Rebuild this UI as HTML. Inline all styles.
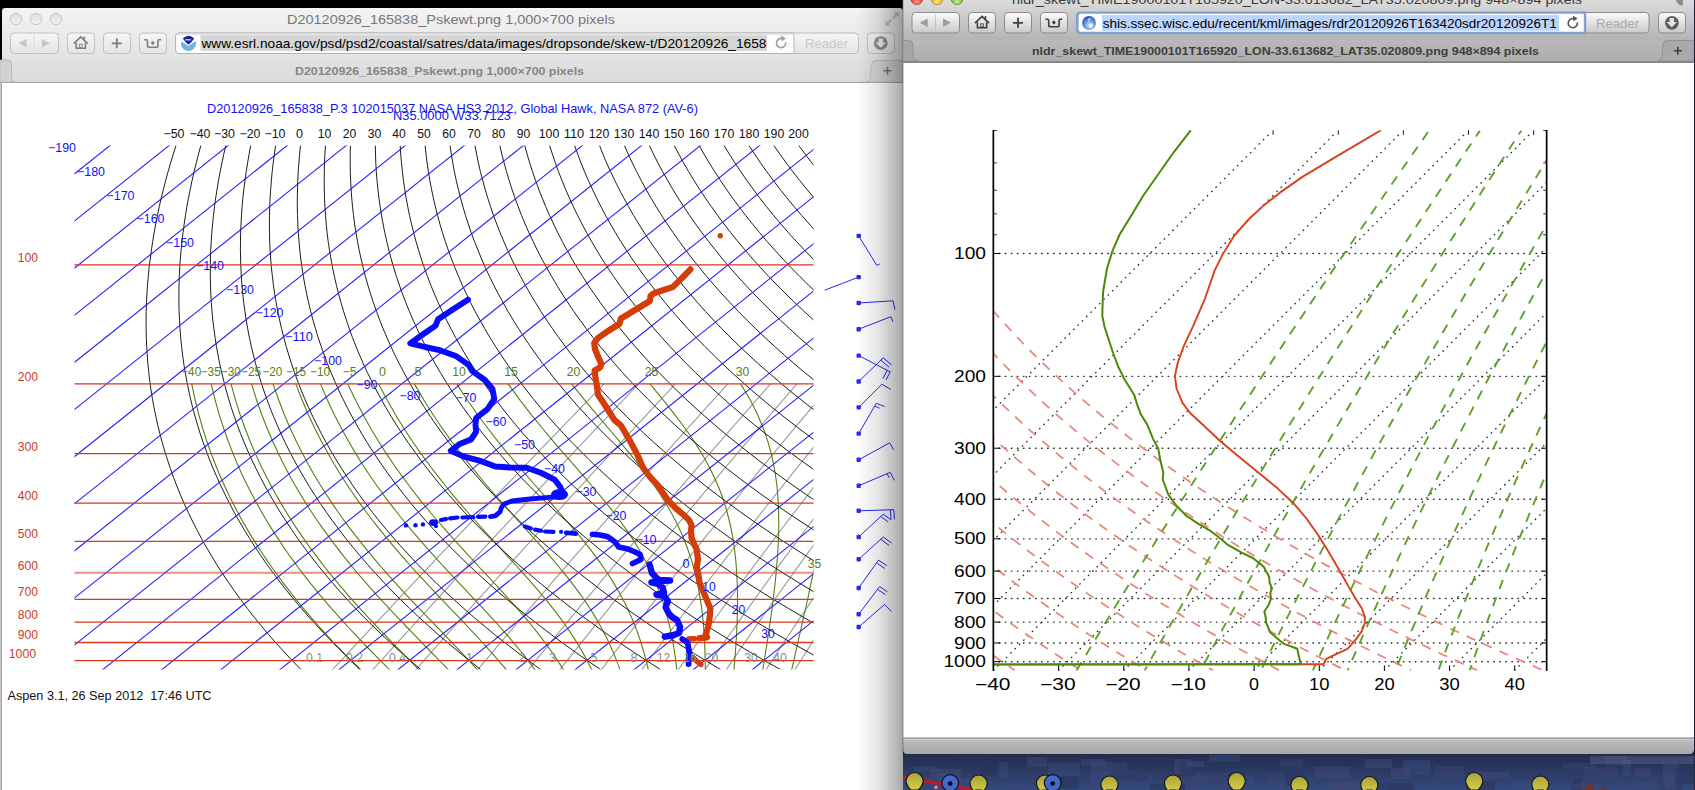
<!DOCTYPE html>
<html><head><meta charset="utf-8"><title>skewt</title>
<style>
html,body{margin:0;padding:0;background:#000;overflow:hidden}
body{width:1695px;height:790px;position:relative}
svg{position:absolute;left:0;top:0;display:block}
text{font-family:"Liberation Sans",sans-serif}
</style></head><body>
<svg width="1695" height="790" viewBox="0 0 1695 790">

<defs>
<linearGradient id="lgTool" x1="0" y1="0" x2="0" y2="1"><stop offset="0" stop-color="#f3f3f3"/><stop offset="1" stop-color="#e3e3e3"/></linearGradient>
<linearGradient id="lgTab" x1="0" y1="0" x2="0" y2="1"><stop offset="0" stop-color="#e2e2e2"/><stop offset="1" stop-color="#dadada"/></linearGradient>
<linearGradient id="lgBtn" x1="0" y1="0" x2="0" y2="1"><stop offset="0" stop-color="#f6f6f6"/><stop offset="1" stop-color="#e4e4e4"/></linearGradient>
<linearGradient id="rgTool" x1="0" y1="0" x2="0" y2="1"><stop offset="0" stop-color="#dcdcdc"/><stop offset="1" stop-color="#b4b4b4"/></linearGradient>
<linearGradient id="rgTab" x1="0" y1="0" x2="0" y2="1"><stop offset="0" stop-color="#b9b9b9"/><stop offset="1" stop-color="#adadad"/></linearGradient>
<linearGradient id="rgBtn" x1="0" y1="0" x2="0" y2="1"><stop offset="0" stop-color="#fbfbfb"/><stop offset="1" stop-color="#c9c9c9"/></linearGradient>
<linearGradient id="rgStat" x1="0" y1="0" x2="0" y2="1"><stop offset="0" stop-color="#c0c0c0"/><stop offset="1" stop-color="#a7a7a7"/></linearGradient>
<linearGradient id="shadowL" x1="0" y1="0" x2="1" y2="0"><stop offset="0" stop-color="#000" stop-opacity="0"/><stop offset="0.45" stop-color="#000" stop-opacity="0.10"/><stop offset="0.8" stop-color="#000" stop-opacity="0.25"/><stop offset="1" stop-color="#000" stop-opacity="0.35"/></linearGradient>
<radialGradient id="tlR" cx="0.5" cy="0.75" r="0.7"><stop offset="0" stop-color="#ff9a8a"/><stop offset="0.6" stop-color="#e8473a"/><stop offset="1" stop-color="#b3261c"/></radialGradient>
<radialGradient id="tlY" cx="0.5" cy="0.75" r="0.7"><stop offset="0" stop-color="#ffe88a"/><stop offset="0.6" stop-color="#f0b62c"/><stop offset="1" stop-color="#b98316"/></radialGradient>
<radialGradient id="tlG" cx="0.5" cy="0.75" r="0.7"><stop offset="0" stop-color="#c8f08c"/><stop offset="0.6" stop-color="#7cc444"/><stop offset="1" stop-color="#4b8a23"/></radialGradient>
<linearGradient id="tlGray" x1="0" y1="0" x2="0" y2="1"><stop offset="0" stop-color="#dcdcdc"/><stop offset="1" stop-color="#f4f4f4"/></linearGradient>
<linearGradient id="pinY" x1="0" y1="0" x2="0" y2="1"><stop offset="0" stop-color="#a9a23a"/><stop offset="1" stop-color="#d8cf4a"/></linearGradient>
<linearGradient id="bandG" x1="0" y1="0" x2="0" y2="1"><stop offset="0" stop-color="#222c4c"/><stop offset="1" stop-color="#34497c"/></linearGradient>
</defs><rect width="1695" height="790" fill="#000"/>
<path d="M2 790 V12.5 Q2 8 6.5 8 H898.5 Q903 8 903 12.5 V790 Z" fill="#fff"/><path d="M2 59 V12.5 Q2 8 6.5 8 H898.5 Q903 8 903 12.5 V59 Z" fill="url(#lgTool)"/><rect x="2" y="8.6" width="901" height="1" fill="#fafafa" opacity="0.8"/><rect x="2" y="59" width="901" height="23.5" fill="url(#lgTab)"/><rect x="0" y="82" width="903" height="1" fill="#a3a3a3"/><path d="M0 60 H8 Q11.5 60 11.5 64 V78 Q11.5 82 15 82 H0 Z" fill="#d2d2d2" stroke="#b4b4b4" stroke-width="0.8"/><path d="M903 60.5 H876 Q872 60.5 871.5 64.5 L870.3 78 Q870 82 866 82 H903 Z" fill="#d6d6d6" stroke="#b9b9b9" stroke-width="0.8"/><path d="M883.5 70.8 H891.5 M887.5 66.8 V74.8" stroke="#7a7a7a" stroke-width="1.5"/><rect x="0" y="83" width="1" height="707" fill="#c6c6c6"/><rect x="1" y="83" width="1" height="707" fill="#a2a2a2"/><circle cx="16" cy="19" r="5.7" fill="url(#tlGray)" stroke="#c2c2c2" stroke-width="0.9"/><circle cx="36" cy="19" r="5.7" fill="url(#tlGray)" stroke="#c2c2c2" stroke-width="0.9"/><circle cx="56" cy="19" r="5.7" fill="url(#tlGray)" stroke="#c2c2c2" stroke-width="0.9"/><text x="451" y="23.6" font-size="13" fill="#767676" text-anchor="middle" font-weight="normal" textLength="328" lengthAdjust="spacingAndGlyphs" >D20120926_165838_Pskewt.png 1,000×700 pixels</text><g fill="#c4c4c4"><path d="M899 12.2 L899 17.6 L897.2 15.8 L893.6 19.4 L891.8 17.6 L895.4 14 L893.6 12.2 Z"/><path d="M885.2 25.8 L885.2 20.4 L887 22.2 L890.6 18.6 L892.4 20.4 L888.8 24 L890.6 25.8 Z"/></g><rect x="10.5" y="33.0" width="48" height="20.5" rx="3.5" fill="url(#lgBtn)" stroke="#c0c0c0"/><rect x="67.5" y="33.0" width="27" height="20.5" rx="3.5" fill="url(#lgBtn)" stroke="#c0c0c0"/><rect x="103.5" y="33.0" width="27" height="20.5" rx="3.5" fill="url(#lgBtn)" stroke="#c0c0c0"/><rect x="139.5" y="33.0" width="27" height="20.5" rx="3.5" fill="url(#lgBtn)" stroke="#c0c0c0"/><line x1="34.2" y1="35.0" x2="34.2" y2="51.0" stroke="#c6c6c6" stroke-width="0.7" opacity="0.7"/><path d="M18.5 43.3 L26.5 39.0 L26.5 47.599999999999994 Z" fill="#c6c6c6"/><path d="M49.8 43.3 L41.8 39.0 L41.8 47.599999999999994 Z" fill="#c6c6c6"/><path d="M73.8 43.599999999999994 L80.8 37.0 L87.8 43.599999999999994" fill="none" stroke="#7d7d7d" stroke-width="1.7" stroke-linejoin="miter"/><path d="M76.2 42.699999999999996 L76.2 48.3 L85.39999999999999 48.3 L85.39999999999999 42.699999999999996" fill="none" stroke="#7d7d7d" stroke-width="1.6"/><rect x="79.5" y="44.3" width="2.6" height="3" fill="none" stroke="#7d7d7d" stroke-width="0.8"/><rect x="83.39999999999999" y="36.699999999999996" width="1.7" height="2.5" fill="#7d7d7d"/><path d="M111.8 43.3 H121.8 M116.8 38.3 V48.3" stroke="#7d7d7d" stroke-width="1.8" fill="none"/><path d="M144.2 39.699999999999996 H146.2 Q147.5 39.699999999999996 147.5 41.3 V45.5 Q147.5 47.3 149.29999999999998 47.3 H156.1 Q157.89999999999998 47.3 157.89999999999998 45.5 V41.3 Q157.89999999999998 39.699999999999996 159.2 39.699999999999996 H161.2" fill="none" stroke="#7d7d7d" stroke-width="1.6"/><path d="M152.7 40.699999999999996 L154.7 42.9 L152.7 45.099999999999994 L150.7 42.9 Z" fill="#7d7d7d"/><rect x="175.5" y="33" width="683" height="20.5" rx="3.5" fill="url(#lgBtn)" stroke="#bdbdbd"/><path d="M179 33 H794 V53.5 H179 Q175.5 53.5 175.5 50 V36.5 Q175.5 33 179 33 Z" fill="#fdfdfd" stroke="#b5b5b5"/><rect x="176.5" y="33.6" width="617" height="1.2" fill="#dcdcdc"/><rect x="200.5" y="35.2" width="566.5" height="15.7" fill="#d5d5d5"/><text x="201.4" y="47.8" font-size="12.8" fill="#000" text-anchor="start" font-weight="normal" textLength="565" lengthAdjust="spacingAndGlyphs" >www.esrl.noaa.gov/psd/psd2/coastal/satres/data/images/dropsonde/skew-t/D20120926_1658</text><circle cx="188.5" cy="43.4" r="7.6" fill="#6eb4e3"/><path d="M179.5 35.3 H197.5 V41.2 L196.4 40.6 L188.5 46.1 L180.6 41.2 L179 42 Z" fill="#fdfdfd"/><path d="M182.8 38.6 Q188.5 32.8 194.2 38.6 Q192 42 188.5 44.8 Q185 42 182.8 38.6 Z" fill="#14219a"/><rect x="185.2" y="39.1" width="5.9" height="1.5" rx="0.5" fill="#aeb9ea"/><path d="M785.6 42.2 A4.6 4.6 0 1 1 782.3 38.6" fill="none" stroke="#9d9d9d" stroke-width="1.6"/><path d="M781.3 35.6 L786 38.4 L781.6 41.2 Z" fill="#9d9d9d"/><text x="826.5" y="48" font-size="13" fill="#c9c9c9" text-anchor="middle" font-weight="normal" textLength="43" lengthAdjust="spacingAndGlyphs" >Reader</text><rect x="867.5" y="33.0" width="27" height="20.5" rx="3.5" fill="url(#lgBtn)" stroke="#c0c0c0"/><circle cx="880.8" cy="43.2" r="6.9" fill="#8d8d8d"/><path d="M878.6 38.6 H883 V42.6 H886 L880.8 47.8 L875.6 42.6 H878.6 Z" fill="#ececec"/><text x="439.5" y="75" font-size="11" fill="#858585" text-anchor="middle" font-weight="bold" textLength="289" lengthAdjust="spacingAndGlyphs" >D20120926_165838_Pskewt.png 1,000×700 pixels</text>
<clipPath id="lcClip"><rect x="74.5" y="145.4" width="739.0" height="524.1"/></clipPath><g clip-path="url(#lcClip)"><path d="M604.0 383.9 L597.0 391.1 L590.0 398.3 L583.1 405.4 L576.2 412.6 L569.2 419.8 L562.3 426.9 L555.4 434.1 L548.5 441.3 L541.6 448.4 L534.7 455.6 L527.8 462.8 L520.9 469.9 L514.1 477.1 L507.2 484.3 L500.3 491.4 L493.5 498.6 L486.7 505.8 L479.8 512.9 L473.0 520.1 L466.2 527.3 L459.4 534.4 L452.6 541.6 L445.8 548.8 L439.0 555.9 L432.3 563.1 L425.5 570.3 L418.7 577.4 L412.0 584.6 L405.2 591.8 L398.5 598.9 L391.8 606.1 L385.1 613.3 L378.4 620.4 L371.7 627.6 L365.0 634.8 L358.3 641.9 L351.7 649.1 L345.0 656.3 L338.4 663.4 L331.7 670.6" fill="none" stroke="#989898" stroke-width="1.05" /><path d="M638.5 383.9 L631.7 391.1 L624.9 398.3 L618.1 405.4 L611.2 412.6 L604.4 419.8 L597.7 426.9 L590.9 434.1 L584.1 441.3 L577.3 448.4 L570.6 455.6 L563.8 462.8 L557.1 469.9 L550.3 477.1 L543.6 484.3 L536.9 491.4 L530.2 498.6 L523.5 505.8 L516.8 512.9 L510.1 520.1 L503.5 527.3 L496.8 534.4 L490.1 541.6 L483.5 548.8 L476.9 555.9 L470.2 563.1 L463.6 570.3 L457.0 577.4 L450.4 584.6 L443.8 591.8 L437.3 598.9 L430.7 606.1 L424.1 613.3 L417.6 620.4 L411.0 627.6 L404.5 634.8 L398.0 641.9 L391.5 649.1 L385.0 656.3 L378.5 663.4 L372.0 670.6" fill="none" stroke="#989898" stroke-width="1.05" /><path d="M675.3 383.9 L668.6 391.1 L661.9 398.3 L655.3 405.4 L648.6 412.6 L641.9 419.8 L635.3 426.9 L628.7 434.1 L622.0 441.3 L615.4 448.4 L608.8 455.6 L602.2 462.8 L595.6 469.9 L589.0 477.1 L582.5 484.3 L575.9 491.4 L569.3 498.6 L562.8 505.8 L556.3 512.9 L549.7 520.1 L543.2 527.3 L536.7 534.4 L530.2 541.6 L523.7 548.8 L517.3 555.9 L510.8 563.1 L504.4 570.3 L497.9 577.4 L491.5 584.6 L485.1 591.8 L478.6 598.9 L472.2 606.1 L465.9 613.3 L459.5 620.4 L453.1 627.6 L446.7 634.8 L440.4 641.9 L434.1 649.1 L427.7 656.3 L421.4 663.4 L415.1 670.6" fill="none" stroke="#989898" stroke-width="1.05" /><path d="M727.7 383.9 L721.2 391.1 L714.7 398.3 L708.3 405.4 L701.8 412.6 L695.4 419.8 L688.9 426.9 L682.5 434.1 L676.1 441.3 L669.7 448.4 L663.3 455.6 L656.9 462.8 L650.6 469.9 L644.2 477.1 L637.9 484.3 L631.5 491.4 L625.2 498.6 L618.9 505.8 L612.6 512.9 L606.3 520.1 L600.0 527.3 L593.7 534.4 L587.5 541.6 L581.2 548.8 L575.0 555.9 L568.8 563.1 L562.6 570.3 L556.4 577.4 L550.2 584.6 L544.0 591.8 L537.9 598.9 L531.7 606.1 L525.6 613.3 L519.4 620.4 L513.3 627.6 L507.2 634.8 L501.1 641.9 L495.1 649.1 L489.0 656.3 L482.9 663.4 L476.9 670.6" fill="none" stroke="#989898" stroke-width="1.05" /><path d="M770.5 383.9 L764.2 391.1 L757.9 398.3 L751.6 405.4 L745.3 412.6 L739.0 419.8 L732.8 426.9 L726.6 434.1 L720.3 441.3 L714.1 448.4 L707.9 455.6 L701.7 462.8 L695.5 469.9 L689.4 477.1 L683.2 484.3 L677.1 491.4 L670.9 498.6 L664.8 505.8 L658.7 512.9 L652.6 520.1 L646.5 527.3 L640.5 534.4 L634.4 541.6 L628.4 548.8 L622.3 555.9 L616.3 563.1 L610.3 570.3 L604.3 577.4 L598.4 584.6 L592.4 591.8 L586.4 598.9 L580.5 606.1 L574.6 613.3 L568.7 620.4 L562.8 627.6 L556.9 634.8 L551.0 641.9 L545.2 649.1 L539.3 656.3 L533.5 663.4 L527.7 670.6" fill="none" stroke="#989898" stroke-width="1.05" /><path d="M796.8 383.9 L790.7 391.1 L784.5 398.3 L778.3 405.4 L772.1 412.6 L766.0 419.8 L759.9 426.9 L753.7 434.1 L747.6 441.3 L741.5 448.4 L735.4 455.6 L729.4 462.8 L723.3 469.9 L717.3 477.1 L711.2 484.3 L705.2 491.4 L699.2 498.6 L693.2 505.8 L687.2 512.9 L681.3 520.1 L675.3 527.3 L669.4 534.4 L663.4 541.6 L657.5 548.8 L651.6 555.9 L645.7 563.1 L639.9 570.3 L634.0 577.4 L628.2 584.6 L622.3 591.8 L616.5 598.9 L610.7 606.1 L604.9 613.3 L599.2 620.4 L593.4 627.6 L587.7 634.8 L581.9 641.9 L576.2 649.1 L570.5 656.3 L564.8 663.4 L559.2 670.6" fill="none" stroke="#989898" stroke-width="1.05" /><path d="M831.6 383.9 L825.6 391.1 L819.5 398.3 L813.5 405.4 L807.5 412.6 L801.5 419.8 L795.5 426.9 L789.6 434.1 L783.6 441.3 L777.7 448.4 L771.7 455.6 L765.8 462.8 L759.9 469.9 L754.1 477.1 L748.2 484.3 L742.3 491.4 L736.5 498.6 L730.7 505.8 L724.8 512.9 L719.0 520.1 L713.3 527.3 L707.5 534.4 L701.7 541.6 L696.0 548.8 L690.3 555.9 L684.6 563.1 L678.9 570.3 L673.2 577.4 L667.5 584.6 L661.9 591.8 L656.3 598.9 L650.6 606.1 L645.0 613.3 L639.5 620.4 L633.9 627.6 L628.3 634.8 L622.8 641.9 L617.3 649.1 L611.8 656.3 L606.3 663.4 L600.8 670.6" fill="none" stroke="#989898" stroke-width="1.05" /><path d="M865.1 383.9 L859.2 391.1 L853.3 398.3 L847.5 405.4 L841.6 412.6 L835.8 419.8 L830.0 426.9 L824.1 434.1 L818.3 441.3 L812.6 448.4 L806.8 455.6 L801.0 462.8 L795.3 469.9 L789.6 477.1 L783.9 484.3 L778.2 491.4 L772.5 498.6 L766.9 505.8 L761.2 512.9 L755.6 520.1 L750.0 527.3 L744.4 534.4 L738.8 541.6 L733.2 548.8 L727.7 555.9 L722.1 563.1 L716.6 570.3 L711.1 577.4 L705.6 584.6 L700.2 591.8 L694.7 598.9 L689.3 606.1 L683.9 613.3 L678.5 620.4 L673.1 627.6 L667.7 634.8 L662.4 641.9 L657.1 649.1 L651.8 656.3 L646.5 663.4 L641.2 670.6" fill="none" stroke="#989898" stroke-width="1.05" /><path d="M895.2 383.9 L889.5 391.1 L883.7 398.3 L878.0 405.4 L872.3 412.6 L866.6 419.8 L860.9 426.9 L855.3 434.1 L849.6 441.3 L844.0 448.4 L838.3 455.6 L832.7 462.8 L827.2 469.9 L821.6 477.1 L816.0 484.3 L810.5 491.4 L805.0 498.6 L799.5 505.8 L794.0 512.9 L788.5 520.1 L783.0 527.3 L777.6 534.4 L772.2 541.6 L766.8 548.8 L761.4 555.9 L756.0 563.1 L750.7 570.3 L745.3 577.4 L740.0 584.6 L734.7 591.8 L729.4 598.9 L724.2 606.1 L718.9 613.3 L713.7 620.4 L708.5 627.6 L703.3 634.8 L698.1 641.9 L693.0 649.1 L687.8 656.3 L682.7 663.4 L677.6 670.6" fill="none" stroke="#989898" stroke-width="1.05" /><path d="M917.3 383.9 L911.6 391.1 L906.0 398.3 L900.4 405.4 L894.8 412.6 L889.2 419.8 L883.6 426.9 L878.0 434.1 L872.5 441.3 L867.0 448.4 L861.4 455.6 L856.0 462.8 L850.5 469.9 L845.0 477.1 L839.6 484.3 L834.1 491.4 L828.7 498.6 L823.3 505.8 L818.0 512.9 L812.6 520.1 L807.3 527.3 L802.0 534.4 L796.6 541.6 L791.4 548.8 L786.1 555.9 L780.8 563.1 L775.6 570.3 L770.4 577.4 L765.2 584.6 L760.0 591.8 L754.9 598.9 L749.7 606.1 L744.6 613.3 L739.5 620.4 L734.5 627.6 L729.4 634.8 L724.4 641.9 L719.4 649.1 L714.4 656.3 L709.4 663.4 L704.4 670.6" fill="none" stroke="#989898" stroke-width="1.05" /><path d="M934.8 383.9 L929.2 391.1 L923.6 398.3 L918.1 405.4 L912.6 412.6 L907.1 419.8 L901.6 426.9 L896.1 434.1 L890.6 441.3 L885.2 448.4 L879.8 455.6 L874.4 462.8 L869.0 469.9 L863.6 477.1 L858.3 484.3 L852.9 491.4 L847.6 498.6 L842.3 505.8 L837.0 512.9 L831.8 520.1 L826.5 527.3 L821.3 534.4 L816.1 541.6 L810.9 548.8 L805.7 555.9 L800.6 563.1 L795.4 570.3 L790.3 577.4 L785.2 584.6 L780.2 591.8 L775.1 598.9 L770.1 606.1 L765.1 613.3 L760.1 620.4 L755.1 627.6 L750.1 634.8 L745.2 641.9 L740.3 649.1 L735.4 656.3 L730.6 663.4 L725.7 670.6" fill="none" stroke="#989898" stroke-width="1.05" /><path d="M967.3 383.9 L961.9 391.1 L956.5 398.3 L951.1 405.4 L945.7 412.6 L940.4 419.8 L935.0 426.9 L929.7 434.1 L924.4 441.3 L919.2 448.4 L913.9 455.6 L908.7 462.8 L903.4 469.9 L898.2 477.1 L893.1 484.3 L887.9 491.4 L882.8 498.6 L877.6 505.8 L872.5 512.9 L867.4 520.1 L862.4 527.3 L857.3 534.4 L852.3 541.6 L847.3 548.8 L842.3 555.9 L837.4 563.1 L832.4 570.3 L827.5 577.4 L822.6 584.6 L817.7 591.8 L812.8 598.9 L808.0 606.1 L803.2 613.3 L798.4 620.4 L793.6 627.6 L788.9 634.8 L784.1 641.9 L779.4 649.1 L774.8 656.3 L770.1 663.4 L765.5 670.6" fill="none" stroke="#989898" stroke-width="1.05" /><path d="M990.9 383.9 L985.6 391.1 L980.3 398.3 L975.0 405.4 L969.8 412.6 L964.6 419.8 L959.4 426.9 L954.2 434.1 L949.0 441.3 L943.8 448.4 L938.7 455.6 L933.6 462.8 L928.5 469.9 L923.4 477.1 L918.4 484.3 L913.3 491.4 L908.3 498.6 L903.3 505.8 L898.4 512.9 L893.4 520.1 L888.5 527.3 L883.6 534.4 L878.7 541.6 L873.8 548.8 L868.9 555.9 L864.1 563.1 L859.3 570.3 L854.5 577.4 L849.8 584.6 L845.0 591.8 L840.3 598.9 L835.6 606.1 L831.0 613.3 L826.3 620.4 L821.7 627.6 L817.1 634.8 L812.5 641.9 L808.0 649.1 L803.4 656.3 L798.9 663.4 L794.4 670.6" fill="none" stroke="#989898" stroke-width="1.05" /><path d="M191.7 383.9 L195.2 400.3 L199.0 415.3 L202.9 429.0 L207.0 441.8 L211.2 453.6 L215.5 464.7 L219.8 475.2 L224.2 485.0 L228.5 494.3 L232.9 503.1 L237.3 511.5 L241.6 519.5 L246.0 527.1 L250.3 534.4 L254.6 541.4 L258.9 548.2 L263.2 554.7 L267.4 560.9 L271.6 567.0 L275.7 572.8 L279.8 578.4 L283.9 583.9 L288.0 589.2 L292.0 594.3 L296.0 599.3 L299.9 604.1 L303.8 608.8 L307.7 613.4 L311.5 617.9 L315.3 622.2 L319.0 626.5 L322.8 630.6 L326.4 634.7 L330.0 638.6 L333.6 642.5 L337.2 646.3 L340.7 650.0 L344.1 653.6 L347.5 657.1 L350.9 660.6 L351.2 660.9 L351.4 661.1 L351.7 661.4 L351.9 661.6 L352.2 661.9 L352.4 662.1 L352.7 662.4 L352.9 662.7 L353.1 662.9 L353.4 663.2 L353.6 663.4 L353.9 663.7 L354.1 663.9 L354.4 664.2 L354.6 664.4 L354.9 664.7 L355.1 664.9 L355.4 665.2 L355.6 665.4 L355.9 665.7 L356.1 665.9 L356.4 666.2 L356.6 666.4 L356.8 666.7 L357.1 666.9 L357.3 667.2 L357.6 667.4 L357.8 667.7 L358.1 667.9 L358.3 668.2 L358.6 668.4 L358.8 668.7 L359.0 668.9 L359.3 669.2 L359.5 669.4 L359.8 669.6 L360.0 669.9 L360.3 670.1 L360.5 670.4 L360.7 670.6" fill="none" stroke="#4f8012" stroke-width="1.1" /><path d="M211.2 383.9 L215.2 400.3 L219.4 415.3 L223.9 429.0 L228.4 441.8 L233.0 453.6 L237.7 464.7 L242.4 475.2 L247.1 485.0 L251.9 494.3 L256.6 503.1 L261.3 511.5 L266.0 519.5 L270.6 527.1 L275.3 534.4 L279.9 541.4 L284.4 548.2 L288.9 554.7 L293.4 560.9 L297.9 567.0 L302.3 572.8 L306.6 578.4 L310.9 583.9 L315.2 589.2 L319.4 594.3 L323.6 599.3 L327.7 604.1 L331.8 608.8 L335.9 613.4 L339.9 617.9 L343.8 622.2 L347.7 626.5 L351.5 630.6 L355.3 634.7 L359.1 638.6 L362.8 642.5 L366.4 646.3 L370.0 650.0 L373.5 653.6 L377.0 657.1 L380.4 660.6 L380.7 660.9 L380.9 661.1 L381.2 661.4 L381.4 661.6 L381.7 661.9 L381.9 662.1 L382.2 662.4 L382.5 662.7 L382.7 662.9 L383.0 663.2 L383.2 663.4 L383.5 663.7 L383.7 663.9 L384.0 664.2 L384.2 664.4 L384.5 664.7 L384.7 664.9 L385.0 665.2 L385.2 665.4 L385.5 665.7 L385.7 665.9 L386.0 666.2 L386.2 666.4 L386.4 666.7 L386.7 666.9 L386.9 667.2 L387.2 667.4 L387.4 667.7 L387.7 667.9 L387.9 668.2 L388.2 668.4 L388.4 668.7 L388.7 668.9 L388.9 669.2 L389.1 669.4 L389.4 669.6 L389.6 669.9 L389.9 670.1 L390.1 670.4 L390.4 670.6" fill="none" stroke="#4f8012" stroke-width="1.1" /><path d="M231.0 383.9 L235.6 400.3 L240.4 415.3 L245.3 429.0 L250.3 441.8 L255.4 453.6 L260.4 464.7 L265.6 475.2 L270.7 485.0 L275.7 494.3 L280.8 503.1 L285.9 511.5 L290.9 519.5 L295.8 527.1 L300.8 534.4 L305.6 541.4 L310.5 548.2 L315.3 554.7 L320.0 560.9 L324.7 567.0 L329.3 572.8 L333.9 578.4 L338.5 583.9 L343.0 589.2 L347.4 594.3 L351.7 599.3 L356.1 604.1 L360.3 608.8 L364.5 613.4 L368.6 617.9 L372.7 622.2 L376.7 626.5 L380.7 630.6 L384.6 634.7 L388.4 638.6 L392.1 642.5 L395.8 646.3 L399.5 650.0 L403.0 653.6 L406.5 657.1 L410.0 660.6 L410.2 660.9 L410.5 661.1 L410.7 661.4 L411.0 661.6 L411.2 661.9 L411.5 662.1 L411.7 662.4 L412.0 662.7 L412.2 662.9 L412.5 663.2 L412.7 663.4 L413.0 663.7 L413.2 663.9 L413.5 664.2 L413.7 664.4 L414.0 664.7 L414.2 664.9 L414.5 665.2 L414.7 665.4 L415.0 665.7 L415.2 665.9 L415.5 666.2 L415.7 666.4 L415.9 666.7 L416.2 666.9 L416.4 667.2 L416.7 667.4 L416.9 667.7 L417.2 667.9 L417.4 668.2 L417.7 668.4 L417.9 668.7 L418.1 668.9 L418.4 669.2 L418.6 669.4 L418.9 669.6 L419.1 669.9 L419.3 670.1 L419.6 670.4 L419.8 670.6" fill="none" stroke="#4f8012" stroke-width="1.1" /><path d="M251.6 383.9 L256.7 400.3 L262.0 415.3 L267.4 429.0 L272.9 441.8 L278.4 453.6 L283.9 464.7 L289.4 475.2 L294.9 485.0 L300.4 494.3 L305.8 503.1 L311.2 511.5 L316.5 519.5 L321.8 527.1 L327.1 534.4 L332.2 541.4 L337.4 548.2 L342.4 554.7 L347.4 560.9 L352.4 567.0 L357.2 572.8 L362.1 578.4 L366.8 583.9 L371.5 589.2 L376.1 594.3 L380.6 599.3 L385.1 604.1 L389.5 608.8 L393.8 613.4 L398.0 617.9 L402.2 622.2 L406.3 626.5 L410.3 630.6 L414.2 634.7 L418.1 638.6 L421.8 642.5 L425.5 646.3 L429.1 650.0 L432.7 653.6 L436.1 657.1 L439.5 660.6 L439.7 660.9 L440.0 661.1 L440.2 661.4 L440.5 661.6 L440.7 661.9 L441.0 662.1 L441.2 662.4 L441.5 662.7 L441.7 662.9 L441.9 663.2 L442.2 663.4 L442.4 663.7 L442.7 663.9 L442.9 664.2 L443.2 664.4 L443.4 664.7 L443.6 664.9 L443.9 665.2 L444.1 665.4 L444.4 665.7 L444.6 665.9 L444.9 666.2 L445.1 666.4 L445.3 666.7 L445.6 666.9 L445.8 667.2 L446.0 667.4 L446.3 667.7 L446.5 667.9 L446.8 668.2 L447.0 668.4 L447.2 668.7 L447.5 668.9 L447.7 669.2 L447.9 669.4 L448.2 669.6 L448.4 669.9 L448.6 670.1 L448.9 670.4 L449.1 670.6" fill="none" stroke="#4f8012" stroke-width="1.1" /><path d="M273.0 383.9 L278.8 400.3 L284.6 415.3 L290.5 429.0 L296.5 441.8 L302.5 453.6 L308.5 464.7 L314.4 475.2 L320.3 485.0 L326.2 494.3 L332.0 503.1 L337.7 511.5 L343.4 519.5 L349.0 527.1 L354.6 534.4 L360.0 541.4 L365.4 548.2 L370.8 554.7 L376.0 560.9 L381.2 567.0 L386.3 572.8 L391.3 578.4 L396.2 583.9 L401.0 589.2 L405.8 594.3 L410.5 599.3 L415.0 604.1 L419.5 608.8 L423.9 613.4 L428.2 617.9 L432.4 622.2 L436.5 626.5 L440.5 630.6 L444.4 634.7 L448.2 638.6 L451.9 642.5 L455.5 646.3 L459.0 650.0 L462.5 653.6 L465.8 657.1 L469.0 660.6 L469.2 660.9 L469.5 661.1 L469.7 661.4 L469.9 661.6 L470.2 661.9 L470.4 662.1 L470.7 662.4 L470.9 662.7 L471.1 662.9 L471.4 663.2 L471.6 663.4 L471.8 663.7 L472.1 663.9 L472.3 664.2 L472.5 664.4 L472.7 664.7 L473.0 664.9 L473.2 665.2 L473.4 665.4 L473.7 665.7 L473.9 665.9 L474.1 666.2 L474.3 666.4 L474.6 666.7 L474.8 666.9 L475.0 667.2 L475.2 667.4 L475.5 667.7 L475.7 667.9 L475.9 668.2 L476.1 668.4 L476.4 668.7 L476.6 668.9 L476.8 669.2 L477.0 669.4 L477.2 669.6 L477.5 669.9 L477.7 670.1 L477.9 670.4 L478.1 670.6" fill="none" stroke="#4f8012" stroke-width="1.1" /><path d="M295.8 383.9 L302.2 400.3 L308.6 415.3 L315.1 429.0 L321.6 441.8 L328.1 453.6 L334.5 464.7 L340.9 475.2 L347.3 485.0 L353.5 494.3 L359.7 503.1 L365.8 511.5 L371.9 519.5 L377.8 527.1 L383.7 534.4 L389.4 541.4 L395.1 548.2 L400.7 554.7 L406.2 560.9 L411.6 567.0 L416.8 572.8 L422.0 578.4 L427.1 583.9 L432.0 589.2 L436.9 594.3 L441.6 599.3 L446.2 604.1 L450.7 608.8 L455.1 613.4 L459.4 617.9 L463.5 622.2 L467.5 626.5 L471.4 630.6 L475.2 634.7 L478.9 638.6 L482.4 642.5 L485.9 646.3 L489.2 650.0 L492.4 653.6 L495.5 657.1 L498.5 660.6 L498.7 660.9 L499.0 661.1 L499.2 661.4 L499.4 661.6 L499.6 661.9 L499.8 662.1 L500.1 662.4 L500.3 662.7 L500.5 662.9 L500.7 663.2 L500.9 663.4 L501.1 663.7 L501.3 663.9 L501.6 664.2 L501.8 664.4 L502.0 664.7 L502.2 664.9 L502.4 665.2 L502.6 665.4 L502.8 665.7 L503.0 665.9 L503.2 666.2 L503.5 666.4 L503.7 666.7 L503.9 666.9 L504.1 667.2 L504.3 667.4 L504.5 667.7 L504.7 667.9 L504.9 668.2 L505.1 668.4 L505.3 668.7 L505.5 668.9 L505.7 669.2 L505.9 669.4 L506.1 669.6 L506.3 669.9 L506.5 670.1 L506.7 670.4 L506.9 670.6" fill="none" stroke="#4f8012" stroke-width="1.1" /><path d="M320.5 383.9 L327.5 400.3 L334.6 415.3 L341.7 429.0 L348.8 441.8 L355.8 453.6 L362.7 464.7 L369.6 475.2 L376.4 485.0 L383.1 494.3 L389.7 503.1 L396.2 511.5 L402.6 519.5 L408.9 527.1 L415.0 534.4 L421.1 541.4 L427.0 548.2 L432.8 554.7 L438.5 560.9 L444.0 567.0 L449.5 572.8 L454.7 578.4 L459.9 583.9 L464.9 589.2 L469.7 594.3 L474.4 599.3 L479.0 604.1 L483.4 608.8 L487.6 613.4 L491.7 617.9 L495.7 622.2 L499.5 626.5 L503.2 630.6 L506.8 634.7 L510.2 638.6 L513.5 642.5 L516.6 646.3 L519.7 650.0 L522.6 653.6 L525.4 657.1 L528.1 660.6 L528.2 660.9 L528.4 661.1 L528.6 661.4 L528.8 661.6 L529.0 661.9 L529.2 662.1 L529.4 662.4 L529.6 662.7 L529.8 662.9 L530.0 663.2 L530.2 663.4 L530.4 663.7 L530.6 663.9 L530.8 664.2 L530.9 664.4 L531.1 664.7 L531.3 664.9 L531.5 665.2 L531.7 665.4 L531.9 665.7 L532.1 665.9 L532.2 666.2 L532.4 666.4 L532.6 666.7 L532.8 666.9 L533.0 667.2 L533.2 667.4 L533.3 667.7 L533.5 667.9 L533.7 668.2 L533.9 668.4 L534.1 668.7 L534.2 668.9 L534.4 669.2 L534.6 669.4 L534.8 669.6 L535.0 669.9 L535.1 670.1 L535.3 670.4 L535.5 670.6" fill="none" stroke="#4f8012" stroke-width="1.1" /><path d="M347.8 383.9 L355.6 400.3 L363.4 415.3 L371.1 429.0 L378.8 441.8 L386.4 453.6 L393.9 464.7 L401.3 475.2 L408.6 485.0 L415.7 494.3 L422.7 503.1 L429.6 511.5 L436.4 519.5 L443.0 527.1 L449.4 534.4 L455.7 541.4 L461.8 548.2 L467.8 554.7 L473.6 560.9 L479.2 567.0 L484.6 572.8 L489.9 578.4 L494.9 583.9 L499.8 589.2 L504.5 594.3 L509.0 599.3 L513.4 604.1 L517.5 608.8 L521.5 613.4 L525.4 617.9 L529.0 622.2 L532.5 626.5 L535.8 630.6 L539.0 634.7 L542.0 638.6 L544.9 642.5 L547.7 646.3 L550.4 650.0 L552.9 653.6 L555.3 657.1 L557.6 660.6 L557.7 660.9 L557.9 661.1 L558.1 661.4 L558.2 661.6 L558.4 661.9 L558.6 662.1 L558.7 662.4 L558.9 662.7 L559.1 662.9 L559.2 663.2 L559.4 663.4 L559.6 663.7 L559.7 663.9 L559.9 664.2 L560.0 664.4 L560.2 664.7 L560.3 664.9 L560.5 665.2 L560.7 665.4 L560.8 665.7 L561.0 665.9 L561.1 666.2 L561.3 666.4 L561.4 666.7 L561.6 666.9 L561.8 667.2 L561.9 667.4 L562.1 667.7 L562.2 667.9 L562.4 668.2 L562.5 668.4 L562.7 668.7 L562.8 668.9 L563.0 669.2 L563.1 669.4 L563.3 669.6 L563.4 669.9 L563.6 670.1 L563.7 670.4 L563.9 670.6" fill="none" stroke="#4f8012" stroke-width="1.1" /><path d="M378.6 383.9 L387.3 400.3 L395.8 415.3 L404.3 429.0 L412.7 441.8 L421.0 453.6 L429.1 464.7 L437.0 475.2 L444.8 485.0 L452.4 494.3 L459.8 503.1 L467.1 511.5 L474.2 519.5 L481.0 527.1 L487.6 534.4 L494.1 541.4 L500.3 548.2 L506.2 554.7 L511.9 560.9 L517.4 567.0 L522.7 572.8 L527.7 578.4 L532.5 583.9 L537.1 589.2 L541.5 594.3 L545.6 599.3 L549.5 604.1 L553.3 608.8 L556.8 613.4 L560.1 617.9 L563.3 622.2 L566.3 626.5 L569.1 630.6 L571.8 634.7 L574.4 638.6 L576.8 642.5 L579.1 646.3 L581.2 650.0 L583.3 653.6 L585.3 657.1 L587.1 660.6 L587.2 660.9 L587.4 661.1 L587.5 661.4 L587.6 661.6 L587.8 661.9 L587.9 662.1 L588.0 662.4 L588.2 662.7 L588.3 662.9 L588.4 663.2 L588.6 663.4 L588.7 663.7 L588.8 663.9 L588.9 664.2 L589.1 664.4 L589.2 664.7 L589.3 664.9 L589.4 665.2 L589.6 665.4 L589.7 665.7 L589.8 665.9 L589.9 666.2 L590.1 666.4 L590.2 666.7 L590.3 666.9 L590.4 667.2 L590.6 667.4 L590.7 667.7 L590.8 667.9 L590.9 668.2 L591.0 668.4 L591.2 668.7 L591.3 668.9 L591.4 669.2 L591.5 669.4 L591.6 669.6 L591.8 669.9 L591.9 670.1 L592.0 670.4 L592.1 670.6" fill="none" stroke="#4f8012" stroke-width="1.1" /><path d="M414.4 383.9 L424.0 400.3 L433.4 415.3 L442.8 429.0 L451.9 441.8 L460.9 453.6 L469.6 464.7 L478.2 475.2 L486.4 485.0 L494.5 494.3 L502.3 503.1 L509.8 511.5 L517.0 519.5 L523.9 527.1 L530.5 534.4 L536.8 541.4 L542.8 548.2 L548.5 554.7 L553.9 560.9 L559.0 567.0 L563.8 572.8 L568.3 578.4 L572.5 583.9 L576.5 589.2 L580.3 594.3 L583.8 599.3 L587.1 604.1 L590.1 608.8 L593.0 613.4 L595.8 617.9 L598.3 622.2 L600.7 626.5 L602.9 630.6 L605.0 634.7 L607.0 638.6 L608.9 642.5 L610.6 646.3 L612.2 650.0 L613.8 653.6 L615.2 657.1 L616.6 660.6 L616.7 660.9 L616.8 661.1 L616.9 661.4 L617.0 661.6 L617.1 661.9 L617.2 662.1 L617.3 662.4 L617.4 662.7 L617.5 662.9 L617.6 663.2 L617.7 663.4 L617.8 663.7 L617.9 663.9 L618.0 664.2 L618.1 664.4 L618.2 664.7 L618.3 664.9 L618.4 665.2 L618.5 665.4 L618.5 665.7 L618.6 665.9 L618.7 666.2 L618.8 666.4 L618.9 666.7 L619.0 666.9 L619.1 667.2 L619.2 667.4 L619.3 667.7 L619.4 667.9 L619.4 668.2 L619.5 668.4 L619.6 668.7 L619.7 668.9 L619.8 669.2 L619.9 669.4 L620.0 669.6 L620.1 669.9 L620.1 670.1 L620.2 670.4 L620.3 670.6" fill="none" stroke="#4f8012" stroke-width="1.1" /><path d="M456.7 383.9 L467.5 400.3 L478.0 415.3 L488.3 429.0 L498.2 441.8 L507.9 453.6 L517.3 464.7 L526.3 475.2 L534.9 485.0 L543.2 494.3 L551.0 503.1 L558.4 511.5 L565.4 519.5 L572.0 527.1 L578.2 534.4 L583.9 541.4 L589.3 548.2 L594.3 554.7 L598.9 560.9 L603.2 567.0 L607.1 572.8 L610.8 578.4 L614.2 583.9 L617.3 589.2 L620.2 594.3 L622.9 599.3 L625.3 604.1 L627.6 608.8 L629.8 613.4 L631.7 617.9 L633.6 622.2 L635.3 626.5 L636.8 630.6 L638.3 634.7 L639.7 638.6 L640.9 642.5 L642.1 646.3 L643.2 650.0 L644.3 653.6 L645.2 657.1 L646.1 660.6 L646.2 660.9 L646.3 661.1 L646.3 661.4 L646.4 661.6 L646.5 661.9 L646.5 662.1 L646.6 662.4 L646.7 662.7 L646.7 662.9 L646.8 663.2 L646.9 663.4 L646.9 663.7 L647.0 663.9 L647.0 664.2 L647.1 664.4 L647.2 664.7 L647.2 664.9 L647.3 665.2 L647.3 665.4 L647.4 665.7 L647.5 665.9 L647.5 666.2 L647.6 666.4 L647.6 666.7 L647.7 666.9 L647.8 667.2 L647.8 667.4 L647.9 667.7 L647.9 667.9 L648.0 668.2 L648.0 668.4 L648.1 668.7 L648.2 668.9 L648.2 669.2 L648.3 669.4 L648.3 669.6 L648.4 669.9 L648.4 670.1 L648.5 670.4 L648.5 670.6" fill="none" stroke="#4f8012" stroke-width="1.1" /><path d="M508.1 383.9 L520.2 400.3 L531.8 415.3 L543.0 429.0 L553.7 441.8 L563.9 453.6 L573.6 464.7 L582.7 475.2 L591.1 485.0 L599.0 494.3 L606.3 503.1 L612.9 511.5 L619.0 519.5 L624.5 527.1 L629.6 534.4 L634.2 541.4 L638.3 548.2 L642.1 554.7 L645.5 560.9 L648.6 567.0 L651.4 572.8 L653.9 578.4 L656.3 583.9 L658.4 589.2 L660.3 594.3 L662.0 599.3 L663.6 604.1 L665.0 608.8 L666.3 613.4 L667.5 617.9 L668.6 622.2 L669.7 626.5 L670.6 630.6 L671.4 634.7 L672.2 638.6 L672.9 642.5 L673.6 646.3 L674.2 650.0 L674.7 653.6 L675.2 657.1 L675.7 660.6 L675.7 660.9 L675.7 661.1 L675.8 661.4 L675.8 661.6 L675.8 661.9 L675.9 662.1 L675.9 662.4 L675.9 662.7 L676.0 662.9 L676.0 663.2 L676.0 663.4 L676.1 663.7 L676.1 663.9 L676.1 664.2 L676.2 664.4 L676.2 664.7 L676.2 664.9 L676.2 665.2 L676.3 665.4 L676.3 665.7 L676.3 665.9 L676.4 666.2 L676.4 666.4 L676.4 666.7 L676.4 666.9 L676.5 667.2 L676.5 667.4 L676.5 667.7 L676.6 667.9 L676.6 668.2 L676.6 668.4 L676.6 668.7 L676.7 668.9 L676.7 669.2 L676.7 669.4 L676.7 669.6 L676.8 669.9 L676.8 670.1 L676.8 670.4 L676.8 670.6" fill="none" stroke="#4f8012" stroke-width="1.1" /><path d="M571.6 383.9 L584.9 400.3 L597.4 415.3 L609.1 429.0 L619.9 441.8 L629.8 453.6 L638.7 464.7 L646.7 475.2 L653.8 485.0 L660.1 494.3 L665.7 503.1 L670.6 511.5 L674.9 519.5 L678.6 527.1 L682.0 534.4 L684.9 541.4 L687.4 548.2 L689.7 554.7 L691.7 560.9 L693.4 567.0 L695.0 572.8 L696.4 578.4 L697.6 583.9 L698.6 589.2 L699.5 594.3 L700.4 599.3 L701.1 604.1 L701.7 608.8 L702.3 613.4 L702.8 617.9 L703.2 622.2 L703.6 626.5 L703.9 630.6 L704.2 634.7 L704.4 638.6 L704.6 642.5 L704.8 646.3 L704.9 650.0 L705.0 653.6 L705.1 657.1 L705.2 660.6 L705.2 660.9 L705.2 661.1 L705.2 661.4 L705.2 661.6 L705.2 661.9 L705.2 662.1 L705.2 662.4 L705.2 662.7 L705.2 662.9 L705.2 663.2 L705.2 663.4 L705.2 663.7 L705.2 663.9 L705.2 664.2 L705.3 664.4 L705.3 664.7 L705.3 664.9 L705.3 665.2 L705.3 665.4 L705.3 665.7 L705.3 665.9 L705.3 666.2 L705.3 666.4 L705.3 666.7 L705.3 666.9 L705.3 667.2 L705.3 667.4 L705.3 667.7 L705.3 667.9 L705.3 668.2 L705.3 668.4 L705.3 668.7 L705.3 668.9 L705.3 669.2 L705.3 669.4 L705.3 669.6 L705.3 669.9 L705.3 670.1 L705.3 670.4 L705.3 670.6" fill="none" stroke="#4f8012" stroke-width="1.1" /><path d="M650.0 383.9 L663.5 400.3 L675.3 415.3 L685.6 429.0 L694.4 441.8 L701.8 453.6 L708.1 464.7 L713.3 475.2 L717.7 485.0 L721.4 494.3 L724.4 503.1 L726.9 511.5 L729.0 519.5 L730.8 527.1 L732.2 534.4 L733.4 541.4 L734.4 548.2 L735.2 554.7 L735.8 560.9 L736.3 567.0 L736.7 572.8 L737.0 578.4 L737.2 583.9 L737.4 589.2 L737.5 594.3 L737.5 599.3 L737.5 604.1 L737.4 608.8 L737.3 613.4 L737.2 617.9 L737.1 622.2 L736.9 626.5 L736.7 630.6 L736.5 634.7 L736.3 638.6 L736.0 642.5 L735.8 646.3 L735.5 650.0 L735.3 653.6 L735.0 657.1 L734.7 660.6 L734.7 660.9 L734.7 661.1 L734.7 661.4 L734.6 661.6 L734.6 661.9 L734.6 662.1 L734.6 662.4 L734.6 662.7 L734.5 662.9 L734.5 663.2 L734.5 663.4 L734.5 663.7 L734.5 663.9 L734.4 664.2 L734.4 664.4 L734.4 664.7 L734.4 664.9 L734.3 665.2 L734.3 665.4 L734.3 665.7 L734.3 665.9 L734.3 666.2 L734.2 666.4 L734.2 666.7 L734.2 666.9 L734.2 667.2 L734.2 667.4 L734.1 667.7 L734.1 667.9 L734.1 668.2 L734.1 668.4 L734.0 668.7 L734.0 668.9 L734.0 669.2 L734.0 669.4 L734.0 669.6 L733.9 669.9 L733.9 670.1 L733.9 670.4 L733.9 670.6" fill="none" stroke="#4f8012" stroke-width="1.1" /><path d="M740.7 383.9 L750.4 400.3 L757.9 415.3 L763.6 429.0 L768.0 441.8 L771.2 453.6 L773.7 464.7 L775.5 475.2 L776.8 485.0 L777.7 494.3 L778.3 503.1 L778.6 511.5 L778.7 519.5 L778.7 527.1 L778.6 534.4 L778.3 541.4 L778.0 548.2 L777.6 554.7 L777.1 560.9 L776.6 567.0 L776.1 572.8 L775.6 578.4 L775.0 583.9 L774.4 589.2 L773.8 594.3 L773.2 599.3 L772.6 604.1 L772.0 608.8 L771.4 613.4 L770.7 617.9 L770.1 622.2 L769.5 626.5 L768.9 630.6 L768.3 634.7 L767.7 638.6 L767.1 642.5 L766.5 646.3 L765.9 650.0 L765.4 653.6 L764.8 657.1 L764.2 660.6 L764.2 660.9 L764.2 661.1 L764.1 661.4 L764.1 661.6 L764.0 661.9 L764.0 662.1 L764.0 662.4 L763.9 662.7 L763.9 662.9 L763.8 663.2 L763.8 663.4 L763.8 663.7 L763.7 663.9 L763.7 664.2 L763.6 664.4 L763.6 664.7 L763.5 664.9 L763.5 665.2 L763.5 665.4 L763.4 665.7 L763.4 665.9 L763.3 666.2 L763.3 666.4 L763.3 666.7 L763.2 666.9 L763.2 667.2 L763.1 667.4 L763.1 667.7 L763.1 667.9 L763.0 668.2 L763.0 668.4 L762.9 668.7 L762.9 668.9 L762.9 669.2 L762.8 669.4 L762.8 669.6 L762.7 669.9 L762.7 670.1 L762.7 670.4 L762.6 670.6" fill="none" stroke="#4f8012" stroke-width="1.1" /><path d="M827.2 383.9 L829.9 400.3 L831.3 415.3 L831.8 429.0 L831.8 441.8 L831.3 453.6 L830.6 464.7 L829.6 475.2 L828.5 485.0 L827.3 494.3 L826.1 503.1 L824.8 511.5 L823.5 519.5 L822.2 527.1 L820.9 534.4 L819.6 541.4 L818.3 548.2 L817.0 554.7 L815.7 560.9 L814.5 567.0 L813.3 572.8 L812.1 578.4 L810.9 583.9 L809.8 589.2 L808.7 594.3 L807.6 599.3 L806.5 604.1 L805.5 608.8 L804.4 613.4 L803.4 617.9 L802.4 622.2 L801.5 626.5 L800.6 630.6 L799.6 634.7 L798.7 638.6 L797.9 642.5 L797.0 646.3 L796.2 650.0 L795.4 653.6 L794.6 657.1 L793.8 660.6 L793.7 660.9 L793.7 661.1 L793.6 661.4 L793.5 661.6 L793.5 661.9 L793.4 662.1 L793.4 662.4 L793.3 662.7 L793.3 662.9 L793.2 663.2 L793.1 663.4 L793.1 663.7 L793.0 663.9 L793.0 664.2 L792.9 664.4 L792.9 664.7 L792.8 664.9 L792.7 665.2 L792.7 665.4 L792.6 665.7 L792.6 665.9 L792.5 666.2 L792.5 666.4 L792.4 666.7 L792.3 666.9 L792.3 667.2 L792.2 667.4 L792.2 667.7 L792.1 667.9 L792.1 668.2 L792.0 668.4 L792.0 668.7 L791.9 668.9 L791.8 669.2 L791.8 669.4 L791.7 669.6 L791.7 669.9 L791.6 670.1 L791.6 670.4 L791.5 670.6" fill="none" stroke="#4f8012" stroke-width="1.1" /><path d="M176.0 145.4 L173.3 154.1 L170.6 162.9 L168.1 171.6 L165.7 180.3 L163.5 189.1 L161.3 197.8 L159.3 206.5 L157.5 215.3 L155.7 224.0 L154.1 232.8 L152.7 241.5 L151.4 250.2 L150.2 259.0 L149.1 267.7 L148.3 276.4 L147.5 285.2 L146.9 293.9 L146.5 302.6 L146.2 311.4 L146.1 320.1 L146.1 328.8 L146.3 337.6 L146.7 346.3 L147.2 355.0 L147.9 363.8 L148.8 372.5 L149.8 381.2 L151.0 390.0 L152.4 398.7 L154.0 407.5 L155.8 416.2 L157.7 424.9 L159.9 433.7 L162.2 442.4 L164.7 451.1 L167.5 459.9 L170.4 468.6 L173.5 477.3 L176.9 486.1 L180.4 494.8 L184.2 503.5 L188.2 512.3 L192.4 521.0 L196.8 529.7 L201.5 538.5 L206.4 547.2 L211.5 555.9 L216.8 564.7 L222.4 573.4 L228.3 582.1 L234.4 590.9 L240.7 599.6 L247.3 608.4 L254.1 617.1 L261.2 625.8 L268.6 634.6 L276.3 643.3 L284.2 652.0 L292.4 660.8 L300.9 669.5" fill="none" stroke="#1c1c1c" stroke-width="1.0" /><path d="M200.9 145.4 L198.5 154.1 L196.3 162.9 L194.1 171.6 L192.1 180.3 L190.3 189.1 L188.5 197.8 L186.9 206.5 L185.5 215.3 L184.2 224.0 L183.0 232.8 L181.9 241.5 L181.1 250.2 L180.3 259.0 L179.7 267.7 L179.3 276.4 L179.0 285.2 L178.9 293.9 L178.9 302.6 L179.1 311.4 L179.5 320.1 L180.0 328.8 L180.7 337.6 L181.6 346.3 L182.6 355.0 L183.8 363.8 L185.2 372.5 L186.8 381.2 L188.6 390.0 L190.5 398.7 L192.6 407.5 L195.0 416.2 L197.5 424.9 L200.2 433.7 L203.2 442.4 L206.3 451.1 L209.6 459.9 L213.2 468.6 L217.0 477.3 L221.0 486.1 L225.2 494.8 L229.6 503.5 L234.2 512.3 L239.1 521.0 L244.2 529.7 L249.6 538.5 L255.2 547.2 L261.0 555.9 L267.1 564.7 L273.5 573.4 L280.0 582.1 L286.9 590.9 L294.0 599.6 L301.4 608.4 L309.0 617.1 L317.0 625.8 L325.2 634.6 L333.6 643.3 L342.4 652.0 L351.5 660.8 L360.8 669.5" fill="none" stroke="#1c1c1c" stroke-width="1.0" /><path d="M225.8 145.4 L223.8 154.1 L221.9 162.9 L220.2 171.6 L218.5 180.3 L217.1 189.1 L215.7 197.8 L214.5 206.5 L213.5 215.3 L212.6 224.0 L211.8 232.8 L211.2 241.5 L210.7 250.2 L210.4 259.0 L210.3 267.7 L210.3 276.4 L210.5 285.2 L210.8 293.9 L211.3 302.6 L212.0 311.4 L212.8 320.1 L213.9 328.8 L215.1 337.6 L216.4 346.3 L218.0 355.0 L219.7 363.8 L221.7 372.5 L223.8 381.2 L226.1 390.0 L228.6 398.7 L231.3 407.5 L234.2 416.2 L237.3 424.9 L240.6 433.7 L244.1 442.4 L247.9 451.1 L251.8 459.9 L256.0 468.6 L260.4 477.3 L265.0 486.1 L269.9 494.8 L275.0 503.5 L280.3 512.3 L285.9 521.0 L291.7 529.7 L297.7 538.5 L304.0 547.2 L310.6 555.9 L317.4 564.7 L324.5 573.4 L331.8 582.1 L339.4 590.9 L347.3 599.6 L355.5 608.4 L363.9 617.1 L372.7 625.8 L381.7 634.6 L391.0 643.3 L400.6 652.0 L410.5 660.8 L420.8 669.5" fill="none" stroke="#1c1c1c" stroke-width="1.0" /><path d="M250.7 145.4 L249.1 154.1 L247.6 162.9 L246.2 171.6 L245.0 180.3 L243.9 189.1 L242.9 197.8 L242.1 206.5 L241.5 215.3 L241.0 224.0 L240.6 232.8 L240.5 241.5 L240.4 250.2 L240.6 259.0 L240.9 267.7 L241.3 276.4 L242.0 285.2 L242.8 293.9 L243.7 302.6 L244.9 311.4 L246.2 320.1 L247.7 328.8 L249.4 337.6 L251.3 346.3 L253.4 355.0 L255.6 363.8 L258.1 372.5 L260.7 381.2 L263.6 390.0 L266.7 398.7 L269.9 407.5 L273.4 416.2 L277.1 424.9 L281.0 433.7 L285.1 442.4 L289.4 451.1 L294.0 459.9 L298.8 468.6 L303.8 477.3 L309.1 486.1 L314.6 494.8 L320.4 503.5 L326.4 512.3 L332.6 521.0 L339.1 529.7 L345.8 538.5 L352.9 547.2 L360.1 555.9 L367.7 564.7 L375.5 573.4 L383.6 582.1 L392.0 590.9 L400.6 599.6 L409.6 608.4 L418.8 617.1 L428.4 625.8 L438.2 634.6 L448.4 643.3 L458.8 652.0 L469.6 660.8 L480.7 669.5" fill="none" stroke="#1c1c1c" stroke-width="1.0" /><path d="M275.6 145.4 L274.4 154.1 L273.2 162.9 L272.2 171.6 L271.4 180.3 L270.7 189.1 L270.1 197.8 L269.7 206.5 L269.5 215.3 L269.4 224.0 L269.5 232.8 L269.7 241.5 L270.1 250.2 L270.7 259.0 L271.4 267.7 L272.4 276.4 L273.4 285.2 L274.7 293.9 L276.2 302.6 L277.8 311.4 L279.6 320.1 L281.6 328.8 L283.8 337.6 L286.2 346.3 L288.8 355.0 L291.5 363.8 L294.5 372.5 L297.7 381.2 L301.1 390.0 L304.7 398.7 L308.6 407.5 L312.6 416.2 L316.9 424.9 L321.4 433.7 L326.1 442.4 L331.0 451.1 L336.2 459.9 L341.6 468.6 L347.3 477.3 L353.2 486.1 L359.3 494.8 L365.7 503.5 L372.4 512.3 L379.3 521.0 L386.5 529.7 L394.0 538.5 L401.7 547.2 L409.7 555.9 L418.0 564.7 L426.5 573.4 L435.4 582.1 L444.5 590.9 L454.0 599.6 L463.7 608.4 L473.7 617.1 L484.1 625.8 L494.7 634.6 L505.7 643.3 L517.0 652.0 L528.7 660.8 L540.6 669.5" fill="none" stroke="#1c1c1c" stroke-width="1.0" /><path d="M300.5 145.4 L299.6 154.1 L298.9 162.9 L298.2 171.6 L297.8 180.3 L297.5 189.1 L297.3 197.8 L297.3 206.5 L297.5 215.3 L297.8 224.0 L298.3 232.8 L299.0 241.5 L299.8 250.2 L300.8 259.0 L302.0 267.7 L303.4 276.4 L304.9 285.2 L306.7 293.9 L308.6 302.6 L310.7 311.4 L313.0 320.1 L315.5 328.8 L318.2 337.6 L321.1 346.3 L324.2 355.0 L327.5 363.8 L331.0 372.5 L334.7 381.2 L338.6 390.0 L342.8 398.7 L347.2 407.5 L351.8 416.2 L356.7 424.9 L361.7 433.7 L367.0 442.4 L372.6 451.1 L378.4 459.9 L384.4 468.6 L390.7 477.3 L397.3 486.1 L404.1 494.8 L411.1 503.5 L418.5 512.3 L426.1 521.0 L433.9 529.7 L442.1 538.5 L450.5 547.2 L459.2 555.9 L468.2 564.7 L477.6 573.4 L487.2 582.1 L497.1 590.9 L507.3 599.6 L517.8 608.4 L528.6 617.1 L539.8 625.8 L551.3 634.6 L563.1 643.3 L575.2 652.0 L587.7 660.8 L600.6 669.5" fill="none" stroke="#1c1c1c" stroke-width="1.0" /><path d="M325.5 145.4 L324.9 154.1 L324.5 162.9 L324.3 171.6 L324.2 180.3 L324.3 189.1 L324.5 197.8 L324.9 206.5 L325.5 215.3 L326.2 224.0 L327.1 232.8 L328.2 241.5 L329.5 250.2 L331.0 259.0 L332.6 267.7 L334.4 276.4 L336.4 285.2 L338.6 293.9 L341.0 302.6 L343.6 311.4 L346.4 320.1 L349.3 328.8 L352.5 337.6 L355.9 346.3 L359.5 355.0 L363.4 363.8 L367.4 372.5 L371.7 381.2 L376.2 390.0 L380.9 398.7 L385.8 407.5 L391.0 416.2 L396.4 424.9 L402.1 433.7 L408.0 442.4 L414.2 451.1 L420.6 459.9 L427.2 468.6 L434.2 477.3 L441.3 486.1 L448.8 494.8 L456.5 503.5 L464.5 512.3 L472.8 521.0 L481.4 529.7 L490.2 538.5 L499.4 547.2 L508.8 555.9 L518.5 564.7 L528.6 573.4 L538.9 582.1 L549.6 590.9 L560.6 599.6 L571.9 608.4 L583.5 617.1 L595.5 625.8 L607.8 634.6 L620.5 643.3 L633.5 652.0 L646.8 660.8 L660.5 669.5" fill="none" stroke="#1c1c1c" stroke-width="1.0" /><path d="M350.4 145.4 L350.2 154.1 L350.2 162.9 L350.3 171.6 L350.6 180.3 L351.1 189.1 L351.7 197.8 L352.5 206.5 L353.5 215.3 L354.6 224.0 L356.0 232.8 L357.5 241.5 L359.2 250.2 L361.1 259.0 L363.2 267.7 L365.4 276.4 L367.9 285.2 L370.5 293.9 L373.4 302.6 L376.5 311.4 L379.7 320.1 L383.2 328.8 L386.9 337.6 L390.8 346.3 L394.9 355.0 L399.3 363.8 L403.9 372.5 L408.7 381.2 L413.7 390.0 L419.0 398.7 L424.5 407.5 L430.2 416.2 L436.2 424.9 L442.5 433.7 L449.0 442.4 L455.7 451.1 L462.8 459.9 L470.0 468.6 L477.6 477.3 L485.4 486.1 L493.5 494.8 L501.9 503.5 L510.6 512.3 L519.5 521.0 L528.8 529.7 L538.3 538.5 L548.2 547.2 L558.3 555.9 L568.8 564.7 L579.6 573.4 L590.7 582.1 L602.1 590.9 L613.9 599.6 L626.0 608.4 L638.4 617.1 L651.2 625.8 L664.3 634.6 L677.8 643.3 L691.7 652.0 L705.9 660.8 L720.5 669.5" fill="none" stroke="#1c1c1c" stroke-width="1.0" /><path d="M375.3 145.4 L375.5 154.1 L375.8 162.9 L376.3 171.6 L377.0 180.3 L377.9 189.1 L378.9 197.8 L380.1 206.5 L381.5 215.3 L383.1 224.0 L384.8 232.8 L386.8 241.5 L388.9 250.2 L391.2 259.0 L393.7 267.7 L396.4 276.4 L399.4 285.2 L402.5 293.9 L405.8 302.6 L409.4 311.4 L413.1 320.1 L417.1 328.8 L421.3 337.6 L425.7 346.3 L430.3 355.0 L435.2 363.8 L440.3 372.5 L445.6 381.2 L451.2 390.0 L457.0 398.7 L463.1 407.5 L469.4 416.2 L476.0 424.9 L482.9 433.7 L489.9 442.4 L497.3 451.1 L504.9 459.9 L512.9 468.6 L521.0 477.3 L529.5 486.1 L538.3 494.8 L547.3 503.5 L556.6 512.3 L566.3 521.0 L576.2 529.7 L586.5 538.5 L597.0 547.2 L607.9 555.9 L619.1 564.7 L630.6 573.4 L642.5 582.1 L654.7 590.9 L667.2 599.6 L680.1 608.4 L693.3 617.1 L706.9 625.8 L720.9 634.6 L735.2 643.3 L749.9 652.0 L764.9 660.8 L780.4 669.5" fill="none" stroke="#1c1c1c" stroke-width="1.0" /><path d="M400.2 145.4 L400.7 154.1 L401.5 162.9 L402.4 171.6 L403.4 180.3 L404.7 189.1 L406.1 197.8 L407.7 206.5 L409.5 215.3 L411.5 224.0 L413.7 232.8 L416.0 241.5 L418.6 250.2 L421.3 259.0 L424.3 267.7 L427.5 276.4 L430.8 285.2 L434.4 293.9 L438.2 302.6 L442.3 311.4 L446.5 320.1 L451.0 328.8 L455.6 337.6 L460.6 346.3 L465.7 355.0 L471.1 363.8 L476.7 372.5 L482.6 381.2 L488.7 390.0 L495.1 398.7 L501.8 407.5 L508.6 416.2 L515.8 424.9 L523.2 433.7 L530.9 442.4 L538.9 451.1 L547.1 459.9 L555.7 468.6 L564.5 477.3 L573.6 486.1 L583.0 494.8 L592.7 503.5 L602.7 512.3 L613.0 521.0 L623.6 529.7 L634.6 538.5 L645.9 547.2 L657.5 555.9 L669.4 564.7 L681.7 573.4 L694.3 582.1 L707.2 590.9 L720.5 599.6 L734.2 608.4 L748.2 617.1 L762.6 625.8 L777.4 634.6 L792.5 643.3 L808.1 652.0 L824.0 660.8 L840.3 669.5" fill="none" stroke="#1c1c1c" stroke-width="1.0" /><path d="M425.1 145.4 L426.0 154.1 L427.1 162.9 L428.4 171.6 L429.8 180.3 L431.5 189.1 L433.3 197.8 L435.3 206.5 L437.5 215.3 L439.9 224.0 L442.5 232.8 L445.3 241.5 L448.3 250.2 L451.5 259.0 L454.9 267.7 L458.5 276.4 L462.3 285.2 L466.4 293.9 L470.6 302.6 L475.1 311.4 L479.9 320.1 L484.8 328.8 L490.0 337.6 L495.4 346.3 L501.1 355.0 L507.0 363.8 L513.2 372.5 L519.6 381.2 L526.3 390.0 L533.2 398.7 L540.4 407.5 L547.9 416.2 L555.6 424.9 L563.6 433.7 L571.9 442.4 L580.5 451.1 L589.3 459.9 L598.5 468.6 L607.9 477.3 L617.7 486.1 L627.7 494.8 L638.1 503.5 L648.7 512.3 L659.7 521.0 L671.1 529.7 L682.7 538.5 L694.7 547.2 L707.0 555.9 L719.7 564.7 L732.7 573.4 L746.0 582.1 L759.8 590.9 L773.8 599.6 L788.3 608.4 L803.1 617.1 L818.3 625.8 L833.9 634.6 L849.9 643.3 L866.3 652.0 L883.1 660.8 L900.3 669.5" fill="none" stroke="#1c1c1c" stroke-width="1.0" /><path d="M450.0 145.4 L451.3 154.1 L452.8 162.9 L454.4 171.6 L456.2 180.3 L458.3 189.1 L460.5 197.8 L462.9 206.5 L465.5 215.3 L468.3 224.0 L471.3 232.8 L474.5 241.5 L478.0 250.2 L481.6 259.0 L485.4 267.7 L489.5 276.4 L493.8 285.2 L498.3 293.9 L503.1 302.6 L508.0 311.4 L513.2 320.1 L518.7 328.8 L524.4 337.6 L530.3 346.3 L536.5 355.0 L542.9 363.8 L549.6 372.5 L556.6 381.2 L563.8 390.0 L571.3 398.7 L579.0 407.5 L587.1 416.2 L595.4 424.9 L604.0 433.7 L612.9 442.4 L622.0 451.1 L631.5 459.9 L641.3 468.6 L651.3 477.3 L661.7 486.1 L672.4 494.8 L683.5 503.5 L694.8 512.3 L706.5 521.0 L718.5 529.7 L730.8 538.5 L743.5 547.2 L756.6 555.9 L770.0 564.7 L783.7 573.4 L797.8 582.1 L812.3 590.9 L827.2 599.6 L842.4 608.4 L858.0 617.1 L874.0 625.8 L890.5 634.6 L907.3 643.3 L924.5 652.0 L942.1 660.8 L960.2 669.5" fill="none" stroke="#1c1c1c" stroke-width="1.0" /><path d="M474.9 145.4 L476.6 154.1 L478.4 162.9 L480.4 171.6 L482.7 180.3 L485.1 189.1 L487.7 197.8 L490.5 206.5 L493.5 215.3 L496.7 224.0 L500.2 232.8 L503.8 241.5 L507.6 250.2 L511.7 259.0 L516.0 267.7 L520.5 276.4 L525.3 285.2 L530.3 293.9 L535.5 302.6 L540.9 311.4 L546.6 320.1 L552.6 328.8 L558.8 337.6 L565.2 346.3 L571.9 355.0 L578.8 363.8 L586.1 372.5 L593.6 381.2 L601.3 390.0 L609.4 398.7 L617.7 407.5 L626.3 416.2 L635.2 424.9 L644.3 433.7 L653.8 442.4 L663.6 451.1 L673.7 459.9 L684.1 468.6 L694.8 477.3 L705.8 486.1 L717.2 494.8 L728.8 503.5 L740.9 512.3 L753.2 521.0 L765.9 529.7 L779.0 538.5 L792.4 547.2 L806.1 555.9 L820.2 564.7 L834.7 573.4 L849.6 582.1 L864.8 590.9 L880.5 599.6 L896.5 608.4 L912.9 617.1 L929.7 625.8 L947.0 634.6 L964.6 643.3 L982.7 652.0 L1001.2 660.8 L1020.1 669.5" fill="none" stroke="#1c1c1c" stroke-width="1.0" /><path d="M499.8 145.4 L501.8 154.1 L504.1 162.9 L506.5 171.6 L509.1 180.3 L511.9 189.1 L514.9 197.8 L518.1 206.5 L521.5 215.3 L525.1 224.0 L529.0 232.8 L533.1 241.5 L537.3 250.2 L541.9 259.0 L546.6 267.7 L551.6 276.4 L556.8 285.2 L562.2 293.9 L567.9 302.6 L573.8 311.4 L580.0 320.1 L586.4 328.8 L593.1 337.6 L600.1 346.3 L607.3 355.0 L614.8 363.8 L622.5 372.5 L630.5 381.2 L638.8 390.0 L647.4 398.7 L656.3 407.5 L665.5 416.2 L674.9 424.9 L684.7 433.7 L694.8 442.4 L705.2 451.1 L715.9 459.9 L726.9 468.6 L738.2 477.3 L749.9 486.1 L761.9 494.8 L774.2 503.5 L786.9 512.3 L800.0 521.0 L813.3 529.7 L827.1 538.5 L841.2 547.2 L855.7 555.9 L870.5 564.7 L885.8 573.4 L901.4 582.1 L917.4 590.9 L933.8 599.6 L950.6 608.4 L967.8 617.1 L985.5 625.8 L1003.5 634.6 L1022.0 643.3 L1040.9 652.0 L1060.3 660.8 L1080.1 669.5" fill="none" stroke="#1c1c1c" stroke-width="1.0" /><path d="M524.7 145.4 L527.1 154.1 L529.7 162.9 L532.5 171.6 L535.5 180.3 L538.7 189.1 L542.1 197.8 L545.7 206.5 L549.5 215.3 L553.6 224.0 L557.8 232.8 L562.3 241.5 L567.0 250.2 L572.0 259.0 L577.2 267.7 L582.6 276.4 L588.2 285.2 L594.2 293.9 L600.3 302.6 L606.7 311.4 L613.4 320.1 L620.3 328.8 L627.5 337.6 L634.9 346.3 L642.7 355.0 L650.7 363.8 L659.0 372.5 L667.5 381.2 L676.4 390.0 L685.5 398.7 L695.0 407.5 L704.7 416.2 L714.7 424.9 L725.1 433.7 L735.8 442.4 L746.7 451.1 L758.1 459.9 L769.7 468.6 L781.7 477.3 L794.0 486.1 L806.6 494.8 L819.6 503.5 L833.0 512.3 L846.7 521.0 L860.8 529.7 L875.2 538.5 L890.0 547.2 L905.2 555.9 L920.8 564.7 L936.8 573.4 L953.1 582.1 L969.9 590.9 L987.1 599.6 L1004.7 608.4 L1022.7 617.1 L1041.2 625.8 L1060.0 634.6 L1079.4 643.3 L1099.1 652.0 L1119.3 660.8 L1140.0 669.5" fill="none" stroke="#1c1c1c" stroke-width="1.0" /><path d="M549.6 145.4 L552.4 154.1 L555.4 162.9 L558.5 171.6 L561.9 180.3 L565.5 189.1 L569.3 197.8 L573.3 206.5 L577.5 215.3 L582.0 224.0 L586.7 232.8 L591.6 241.5 L596.7 250.2 L602.1 259.0 L607.7 267.7 L613.6 276.4 L619.7 285.2 L626.1 293.9 L632.7 302.6 L639.6 311.4 L646.8 320.1 L654.2 328.8 L661.9 337.6 L669.8 346.3 L678.1 355.0 L686.6 363.8 L695.4 372.5 L704.5 381.2 L713.9 390.0 L723.6 398.7 L733.6 407.5 L743.9 416.2 L754.5 424.9 L765.5 433.7 L776.7 442.4 L788.3 451.1 L800.2 459.9 L812.5 468.6 L825.1 477.3 L838.1 486.1 L851.4 494.8 L865.0 503.5 L879.0 512.3 L893.4 521.0 L908.2 529.7 L923.3 538.5 L938.9 547.2 L954.8 555.9 L971.1 564.7 L987.8 573.4 L1004.9 582.1 L1022.5 590.9 L1040.4 599.6 L1058.8 608.4 L1077.6 617.1 L1096.9 625.8 L1116.6 634.6 L1136.7 643.3 L1157.3 652.0 L1178.4 660.8 L1199.9 669.5" fill="none" stroke="#1c1c1c" stroke-width="1.0" /><path d="M574.5 145.4 L577.7 154.1 L581.0 162.9 L584.5 171.6 L588.3 180.3 L592.3 189.1 L596.5 197.8 L600.9 206.5 L605.5 215.3 L610.4 224.0 L615.5 232.8 L620.8 241.5 L626.4 250.2 L632.2 259.0 L638.3 267.7 L644.6 276.4 L651.2 285.2 L658.0 293.9 L665.1 302.6 L672.5 311.4 L680.1 320.1 L688.0 328.8 L696.2 337.6 L704.7 346.3 L713.5 355.0 L722.5 363.8 L731.8 372.5 L741.5 381.2 L751.4 390.0 L761.7 398.7 L772.2 407.5 L783.1 416.2 L794.3 424.9 L805.8 433.7 L817.7 442.4 L829.9 451.1 L842.4 459.9 L855.3 468.6 L868.5 477.3 L882.1 486.1 L896.1 494.8 L910.4 503.5 L925.1 512.3 L940.2 521.0 L955.6 529.7 L971.5 538.5 L987.7 547.2 L1004.3 555.9 L1021.4 564.7 L1038.8 573.4 L1056.7 582.1 L1075.0 590.9 L1093.7 599.6 L1112.9 608.4 L1132.5 617.1 L1152.6 625.8 L1173.1 634.6 L1194.1 643.3 L1215.5 652.0 L1237.5 660.8 L1259.9 669.5" fill="none" stroke="#1c1c1c" stroke-width="1.0" /><path d="M599.5 145.4 L602.9 154.1 L606.6 162.9 L610.6 171.6 L614.7 180.3 L619.1 189.1 L623.7 197.8 L628.5 206.5 L633.5 215.3 L638.8 224.0 L644.3 232.8 L650.1 241.5 L656.1 250.2 L662.4 259.0 L668.9 267.7 L675.7 276.4 L682.7 285.2 L690.0 293.9 L697.6 302.6 L705.4 311.4 L713.5 320.1 L721.9 328.8 L730.6 337.6 L739.6 346.3 L748.8 355.0 L758.4 363.8 L768.3 372.5 L778.5 381.2 L788.9 390.0 L799.7 398.7 L810.9 407.5 L822.3 416.2 L834.1 424.9 L846.2 433.7 L858.7 442.4 L871.5 451.1 L884.6 459.9 L898.1 468.6 L912.0 477.3 L926.2 486.1 L940.8 494.8 L955.8 503.5 L971.1 512.3 L986.9 521.0 L1003.0 529.7 L1019.6 538.5 L1036.5 547.2 L1053.9 555.9 L1071.7 564.7 L1089.9 573.4 L1108.5 582.1 L1127.5 590.9 L1147.0 599.6 L1167.0 608.4 L1187.4 617.1 L1208.3 625.8 L1229.6 634.6 L1251.4 643.3 L1273.7 652.0 L1296.5 660.8 L1319.8 669.5" fill="none" stroke="#1c1c1c" stroke-width="1.0" /><path d="M624.4 145.4 L628.2 154.1 L632.3 162.9 L636.6 171.6 L641.1 180.3 L645.9 189.1 L650.8 197.8 L656.1 206.5 L661.5 215.3 L667.2 224.0 L673.2 232.8 L679.4 241.5 L685.8 250.2 L692.5 259.0 L699.5 267.7 L706.7 276.4 L714.2 285.2 L721.9 293.9 L730.0 302.6 L738.3 311.4 L746.9 320.1 L755.8 328.8 L765.0 337.6 L774.5 346.3 L784.2 355.0 L794.3 363.8 L804.7 372.5 L815.4 381.2 L826.5 390.0 L837.8 398.7 L849.5 407.5 L861.5 416.2 L873.9 424.9 L886.6 433.7 L899.6 442.4 L913.0 451.1 L926.8 459.9 L940.9 468.6 L955.4 477.3 L970.3 486.1 L985.5 494.8 L1001.2 503.5 L1017.2 512.3 L1033.6 521.0 L1050.5 529.7 L1067.7 538.5 L1085.4 547.2 L1103.4 555.9 L1121.9 564.7 L1140.9 573.4 L1160.3 582.1 L1180.1 590.9 L1200.4 599.6 L1221.1 608.4 L1242.3 617.1 L1264.0 625.8 L1286.2 634.6 L1308.8 643.3 L1332.0 652.0 L1355.6 660.8 L1379.8 669.5" fill="none" stroke="#1c1c1c" stroke-width="1.0" /><path d="M649.3 145.4 L653.5 154.1 L657.9 162.9 L662.6 171.6 L667.5 180.3 L672.7 189.1 L678.0 197.8 L683.7 206.5 L689.5 215.3 L695.6 224.0 L702.0 232.8 L708.6 241.5 L715.5 250.2 L722.6 259.0 L730.0 267.7 L737.7 276.4 L745.7 285.2 L753.9 293.9 L762.4 302.6 L771.2 311.4 L780.3 320.1 L789.7 328.8 L799.3 337.6 L809.3 346.3 L819.6 355.0 L830.2 363.8 L841.2 372.5 L852.4 381.2 L864.0 390.0 L875.9 398.7 L888.1 407.5 L900.7 416.2 L913.7 424.9 L927.0 433.7 L940.6 442.4 L954.6 451.1 L969.0 459.9 L983.7 468.6 L998.9 477.3 L1014.4 486.1 L1030.3 494.8 L1046.6 503.5 L1063.3 512.3 L1080.4 521.0 L1097.9 529.7 L1115.8 538.5 L1134.2 547.2 L1153.0 555.9 L1172.2 564.7 L1191.9 573.4 L1212.0 582.1 L1232.6 590.9 L1253.7 599.6 L1275.2 608.4 L1297.2 617.1 L1319.7 625.8 L1342.7 634.6 L1366.2 643.3 L1390.2 652.0 L1414.7 660.8 L1439.7 669.5" fill="none" stroke="#1c1c1c" stroke-width="1.0" /><path d="M674.2 145.4 L678.8 154.1 L683.6 162.9 L688.6 171.6 L693.9 180.3 L699.5 189.1 L705.2 197.8 L711.3 206.5 L717.5 215.3 L724.0 224.0 L730.8 232.8 L737.9 241.5 L745.2 250.2 L752.8 259.0 L760.6 267.7 L768.7 276.4 L777.1 285.2 L785.8 293.9 L794.8 302.6 L804.1 311.4 L813.7 320.1 L823.5 328.8 L833.7 337.6 L844.2 346.3 L855.0 355.0 L866.1 363.8 L877.6 372.5 L889.4 381.2 L901.5 390.0 L914.0 398.7 L926.8 407.5 L939.9 416.2 L953.5 424.9 L967.3 433.7 L981.6 442.4 L996.2 451.1 L1011.2 459.9 L1026.5 468.6 L1042.3 477.3 L1058.4 486.1 L1075.0 494.8 L1091.9 503.5 L1109.3 512.3 L1127.1 521.0 L1145.3 529.7 L1163.9 538.5 L1183.0 547.2 L1202.5 555.9 L1222.5 564.7 L1242.9 573.4 L1263.8 582.1 L1285.2 590.9 L1307.0 599.6 L1329.3 608.4 L1352.1 617.1 L1375.4 625.8 L1399.2 634.6 L1423.5 643.3 L1448.4 652.0 L1473.7 660.8 L1499.6 669.5" fill="none" stroke="#1c1c1c" stroke-width="1.0" /><path d="M699.1 145.4 L704.0 154.1 L709.2 162.9 L714.7 171.6 L720.3 180.3 L726.3 189.1 L732.4 197.8 L738.9 206.5 L745.5 215.3 L752.5 224.0 L759.7 232.8 L767.1 241.5 L774.9 250.2 L782.9 259.0 L791.2 267.7 L799.7 276.4 L808.6 285.2 L817.8 293.9 L827.2 302.6 L837.0 311.4 L847.0 320.1 L857.4 328.8 L868.1 337.6 L879.1 346.3 L890.4 355.0 L902.1 363.8 L914.0 372.5 L926.4 381.2 L939.0 390.0 L952.1 398.7 L965.4 407.5 L979.1 416.2 L993.2 424.9 L1007.7 433.7 L1022.5 442.4 L1037.7 451.1 L1053.3 459.9 L1069.3 468.6 L1085.7 477.3 L1102.5 486.1 L1119.7 494.8 L1137.3 503.5 L1155.4 512.3 L1173.8 521.0 L1192.7 529.7 L1212.1 538.5 L1231.9 547.2 L1252.1 555.9 L1272.8 564.7 L1294.0 573.4 L1315.6 582.1 L1337.7 590.9 L1360.3 599.6 L1383.4 608.4 L1407.0 617.1 L1431.1 625.8 L1455.7 634.6 L1480.9 643.3 L1506.6 652.0 L1532.8 660.8 L1559.6 669.5" fill="none" stroke="#1c1c1c" stroke-width="1.0" /><path d="M724.0 145.4 L729.3 154.1 L734.9 162.9 L740.7 171.6 L746.8 180.3 L753.1 189.1 L759.6 197.8 L766.4 206.5 L773.5 215.3 L780.9 224.0 L788.5 232.8 L796.4 241.5 L804.6 250.2 L813.0 259.0 L821.7 267.7 L830.8 276.4 L840.1 285.2 L849.7 293.9 L859.6 302.6 L869.9 311.4 L880.4 320.1 L891.3 328.8 L902.5 337.6 L914.0 346.3 L925.8 355.0 L938.0 363.8 L950.5 372.5 L963.4 381.2 L976.6 390.0 L990.1 398.7 L1004.1 407.5 L1018.4 416.2 L1033.0 424.9 L1048.1 433.7 L1063.5 442.4 L1079.3 451.1 L1095.5 459.9 L1112.1 468.6 L1129.2 477.3 L1146.6 486.1 L1164.4 494.8 L1182.7 503.5 L1201.4 512.3 L1220.6 521.0 L1240.2 529.7 L1260.2 538.5 L1280.7 547.2 L1301.6 555.9 L1323.1 564.7 L1345.0 573.4 L1367.4 582.1 L1390.2 590.9 L1413.6 599.6 L1437.5 608.4 L1461.9 617.1 L1486.8 625.8 L1512.3 634.6 L1538.3 643.3 L1564.8 652.0 L1591.9 660.8 L1619.5 669.5" fill="none" stroke="#1c1c1c" stroke-width="1.0" /><path d="M748.9 145.4 L754.6 154.1 L760.5 162.9 L766.7 171.6 L773.2 180.3 L779.9 189.1 L786.8 197.8 L794.0 206.5 L801.5 215.3 L809.3 224.0 L817.3 232.8 L825.6 241.5 L834.2 250.2 L843.1 259.0 L852.3 267.7 L861.8 276.4 L871.6 285.2 L881.7 293.9 L892.1 302.6 L902.8 311.4 L913.8 320.1 L925.1 328.8 L936.8 337.6 L948.8 346.3 L961.2 355.0 L973.9 363.8 L986.9 372.5 L1000.3 381.2 L1014.1 390.0 L1028.2 398.7 L1042.7 407.5 L1057.6 416.2 L1072.8 424.9 L1088.4 433.7 L1104.5 442.4 L1120.9 451.1 L1137.7 459.9 L1155.0 468.6 L1172.6 477.3 L1190.7 486.1 L1209.2 494.8 L1228.1 503.5 L1247.5 512.3 L1267.3 521.0 L1287.6 529.7 L1308.3 538.5 L1329.5 547.2 L1351.2 555.9 L1373.4 564.7 L1396.0 573.4 L1419.1 582.1 L1442.8 590.9 L1466.9 599.6 L1491.6 608.4 L1516.8 617.1 L1542.5 625.8 L1568.8 634.6 L1595.6 643.3 L1623.0 652.0 L1650.9 660.8 L1679.4 669.5" fill="none" stroke="#1c1c1c" stroke-width="1.0" /><path d="M773.8 145.4 L779.9 154.1 L786.2 162.9 L792.8 171.6 L799.6 180.3 L806.7 189.1 L814.0 197.8 L821.6 206.5 L829.5 215.3 L837.7 224.0 L846.2 232.8 L854.9 241.5 L863.9 250.2 L873.3 259.0 L882.9 267.7 L892.8 276.4 L903.1 285.2 L913.6 293.9 L924.5 302.6 L935.7 311.4 L947.2 320.1 L959.0 328.8 L971.2 337.6 L983.7 346.3 L996.6 355.0 L1009.8 363.8 L1023.4 372.5 L1037.3 381.2 L1051.6 390.0 L1066.3 398.7 L1081.3 407.5 L1096.8 416.2 L1112.6 424.9 L1128.8 433.7 L1145.4 442.4 L1162.5 451.1 L1179.9 459.9 L1197.8 468.6 L1216.0 477.3 L1234.8 486.1 L1253.9 494.8 L1273.5 503.5 L1293.5 512.3 L1314.0 521.0 L1335.0 529.7 L1356.4 538.5 L1378.4 547.2 L1400.8 555.9 L1423.6 564.7 L1447.0 573.4 L1470.9 582.1 L1495.3 590.9 L1520.3 599.6 L1545.7 608.4 L1571.7 617.1 L1598.2 625.8 L1625.3 634.6 L1653.0 643.3 L1681.2 652.0 L1710.0 660.8 L1739.4 669.5" fill="none" stroke="#1c1c1c" stroke-width="1.0" /><path d="M798.7 145.4 L805.2 154.1 L811.8 162.9 L818.8 171.6 L826.0 180.3 L833.5 189.1 L841.2 197.8 L849.2 206.5 L857.5 215.3 L866.1 224.0 L875.0 232.8 L884.2 241.5 L893.6 250.2 L903.4 259.0 L913.5 267.7 L923.8 276.4 L934.5 285.2 L945.5 293.9 L956.9 302.6 L968.5 311.4 L980.5 320.1 L992.9 328.8 L1005.6 337.6 L1018.6 346.3 L1032.0 355.0 L1045.7 363.8 L1059.8 372.5 L1074.3 381.2 L1089.1 390.0 L1104.4 398.7 L1120.0 407.5 L1136.0 416.2 L1152.4 424.9 L1169.2 433.7 L1186.4 442.4 L1204.0 451.1 L1222.1 459.9 L1240.6 468.6 L1259.5 477.3 L1278.8 486.1 L1298.6 494.8 L1318.9 503.5 L1339.6 512.3 L1360.8 521.0 L1382.4 529.7 L1404.6 538.5 L1427.2 547.2 L1450.3 555.9 L1473.9 564.7 L1498.1 573.4 L1522.7 582.1 L1547.9 590.9 L1573.6 599.6 L1599.8 608.4 L1626.6 617.1 L1653.9 625.8 L1681.9 634.6 L1710.3 643.3 L1739.4 652.0 L1769.1 660.8 L1799.3 669.5" fill="none" stroke="#1c1c1c" stroke-width="1.0" /><line x1="-552.9" y1="674.5" x2="116.4" y2="140.4" stroke="#1a1aff" stroke-width="1.05"/><line x1="-493.8" y1="674.5" x2="175.5" y2="140.4" stroke="#1a1aff" stroke-width="1.05"/><line x1="-434.8" y1="674.5" x2="234.5" y2="140.4" stroke="#1a1aff" stroke-width="1.05"/><line x1="-375.7" y1="674.5" x2="293.6" y2="140.4" stroke="#1a1aff" stroke-width="1.05"/><line x1="-316.7" y1="674.5" x2="352.6" y2="140.4" stroke="#1a1aff" stroke-width="1.05"/><line x1="-257.6" y1="674.5" x2="411.7" y2="140.4" stroke="#1a1aff" stroke-width="1.05"/><line x1="-198.6" y1="674.5" x2="470.7" y2="140.4" stroke="#1a1aff" stroke-width="1.05"/><line x1="-139.5" y1="674.5" x2="529.8" y2="140.4" stroke="#1a1aff" stroke-width="1.05"/><line x1="-80.5" y1="674.5" x2="588.8" y2="140.4" stroke="#1a1aff" stroke-width="1.05"/><line x1="-21.4" y1="674.5" x2="647.9" y2="140.4" stroke="#1a1aff" stroke-width="1.05"/><line x1="37.6" y1="674.5" x2="706.9" y2="140.4" stroke="#1a1aff" stroke-width="1.05"/><line x1="96.7" y1="674.5" x2="766.0" y2="140.4" stroke="#1a1aff" stroke-width="1.05"/><line x1="155.7" y1="674.5" x2="825.0" y2="140.4" stroke="#1a1aff" stroke-width="1.05"/><line x1="214.8" y1="674.5" x2="884.1" y2="140.4" stroke="#1a1aff" stroke-width="1.05"/><line x1="273.8" y1="674.5" x2="943.1" y2="140.4" stroke="#1a1aff" stroke-width="1.05"/><line x1="332.9" y1="674.5" x2="1002.2" y2="140.4" stroke="#1a1aff" stroke-width="1.05"/><line x1="391.9" y1="674.5" x2="1061.2" y2="140.4" stroke="#1a1aff" stroke-width="1.05"/><line x1="451.0" y1="674.5" x2="1120.3" y2="140.4" stroke="#1a1aff" stroke-width="1.05"/><line x1="510.0" y1="674.5" x2="1179.3" y2="140.4" stroke="#1a1aff" stroke-width="1.05"/><line x1="569.1" y1="674.5" x2="1238.4" y2="140.4" stroke="#1a1aff" stroke-width="1.05"/><line x1="628.1" y1="674.5" x2="1297.4" y2="140.4" stroke="#1a1aff" stroke-width="1.05"/><line x1="687.2" y1="674.5" x2="1356.5" y2="140.4" stroke="#1a1aff" stroke-width="1.05"/><line x1="746.2" y1="674.5" x2="1415.5" y2="140.4" stroke="#1a1aff" stroke-width="1.05"/></g><line x1="74.5" y1="264.8" x2="813.5" y2="264.8" stroke="#d8391c" stroke-width="1.3"/><line x1="74.5" y1="383.9" x2="813.5" y2="383.9" stroke="#d8391c" stroke-width="1.3"/><line x1="74.5" y1="453.6" x2="813.5" y2="453.6" stroke="#d8391c" stroke-width="1.3"/><line x1="74.5" y1="503.1" x2="813.5" y2="503.1" stroke="#d8391c" stroke-width="1.3"/><line x1="74.5" y1="541.4" x2="813.5" y2="541.4" stroke="#d8391c" stroke-width="1.3"/><line x1="74.5" y1="572.8" x2="813.5" y2="572.8" stroke="#d8391c" stroke-width="2.0" opacity="0.55"/><line x1="74.5" y1="599.3" x2="813.5" y2="599.3" stroke="#d8391c" stroke-width="1.3"/><line x1="74.5" y1="622.2" x2="813.5" y2="622.2" stroke="#d8391c" stroke-width="1.3"/><line x1="74.5" y1="642.5" x2="813.5" y2="642.5" stroke="#d8391c" stroke-width="1.3"/><line x1="74.5" y1="660.6" x2="813.5" y2="660.6" stroke="#d8391c" stroke-width="1.3"/><path d="M690.4 269.4 L683.0 277.0 L672.7 287.1 L662.0 290.5 L653.7 293.4 L650.5 296.0 L649.9 301.0 L640.0 307.0 L620.8 318.7 L619.5 323.8 L612.0 328.5 L605.6 332.7 L598.0 338.0 L594.2 342.8 L595.0 349.0 L598.0 356.7 L601.5 364.0 L600.0 367.5 L594.6 370.5 L595.5 378.0 L596.7 384.6 L598.0 394.7 L603.0 402.0 L614.4 420.0 L620.8 425.3 L630.0 441.0 L637.2 454.4 L643.5 468.4 L650.0 477.0 L657.5 484.8 L663.0 493.0 L668.9 501.3 L676.0 508.5 L684.0 515.2 L689.0 520.0 L691.6 525.3 L691.0 531.0 L691.6 538.0 L694.0 544.0 L696.7 549.4 L698.0 559.5 L696.7 567.0 L698.2 573.7 L699.5 582.3 L701.3 587.3 L704.3 594.0 L706.6 599.5 L710.4 608.6 L709.6 617.7 L708.1 626.8 L705.8 634.4 L707.0 637.3 L699.5 638.2" fill="none" stroke="#d43c08" stroke-width="6.2" stroke-linejoin="round" stroke-linecap="round"/><path d="M694.5 638.7 L688.8 639.0" fill="none" stroke="#d43c08" stroke-width="5.6" stroke-linejoin="round" stroke-linecap="round"/><path d="M693.2 657.5 L697.0 661.5 L701.0 664.6" fill="none" stroke="#d43c08" stroke-width="5.2" stroke-linejoin="round" stroke-linecap="round"/><circle cx="720.3" cy="235.7" r="2.7" fill="#d43c08"/><path d="M468.0 299.7 L452.0 310.0 L438.1 319.2 L435.6 325.6 L422.0 335.0 L410.3 343.3 L425.0 347.0 L440.6 350.4 L455.8 355.9 L468.5 364.8 L472.3 371.1 L484.9 380.0 L492.5 388.9 L494.3 399.0 L487.5 409.1 L476.1 418.0 L475.5 425.0 L476.1 431.9 L471.0 439.5 L459.6 444.0 L450.8 450.9 L464.0 456.6 L478.6 460.3 L495.3 466.5 L510.0 467.5 L526.7 467.8 L541.4 473.0 L554.6 479.6 L560.3 487.0 L562.5 492.5" fill="none" stroke="#0a0aff" stroke-width="5.9" stroke-linejoin="round" stroke-linecap="round"/><ellipse cx="559.5" cy="494.5" rx="8.5" ry="5.5" fill="#0a0aff"/><path d="M560.0 496.5 L546.3 497.7 L530.0 499.0 L511.8 501.0 L503.5 504.3 L501.0 508.5 L500.2 511.7 L495.3 515.8 L490.4 516.6" fill="none" stroke="#0a0aff" stroke-width="4.8" stroke-linejoin="round" stroke-linecap="round"/><path d="M485.4 516.6 L478.0 516.8" fill="none" stroke="#0a0aff" stroke-width="4.2" stroke-linejoin="round" stroke-linecap="round"/><path d="M473.0 517.0 L462.4 517.5" fill="none" stroke="#0a0aff" stroke-width="4.2" stroke-linejoin="round" stroke-linecap="round"/><path d="M457.5 517.5 L450.0 518.3" fill="none" stroke="#0a0aff" stroke-width="4.2" stroke-linejoin="round" stroke-linecap="round"/><path d="M446.0 519.0 L441.0 520.0" fill="none" stroke="#0a0aff" stroke-width="4.2" stroke-linejoin="round" stroke-linecap="round"/><ellipse cx="433.5" cy="522.6" rx="4.6" ry="3.4" fill="#0a0aff"/><circle cx="436" cy="526.3" r="2" fill="#0a0aff"/><circle cx="422.9" cy="524.4" r="2.2" fill="#0a0aff"/><circle cx="415.5" cy="525.2" r="2.2" fill="#0a0aff"/><circle cx="406" cy="525.4" r="2.2" fill="#0a0aff"/><path d="M524.9 526.5 L531.0 528.5" fill="none" stroke="#0a0aff" stroke-width="4" stroke-linejoin="round" stroke-linecap="round"/><path d="M535.0 529.6 L541.0 530.8" fill="none" stroke="#0a0aff" stroke-width="4.2" stroke-linejoin="round" stroke-linecap="round"/><path d="M545.0 531.5 L553.5 531.9" fill="none" stroke="#0a0aff" stroke-width="4.2" stroke-linejoin="round" stroke-linecap="round"/><circle cx="561.1" cy="531.8" r="2.1" fill="#0a0aff"/><path d="M566.1 532.8 L576.0 533.6" fill="none" stroke="#0a0aff" stroke-width="4.6" stroke-linejoin="round" stroke-linecap="round"/><path d="M592.4 534.3 L600.0 535.0 L607.2 536.4 L611.0 539.0 L615.4 542.2 L618.7 547.1 L627.0 548.7 L634.0 551.5 L640.1 554.5 L641.0 559.4 L632.5 563.5" fill="none" stroke="#0a0aff" stroke-width="5.6" stroke-linejoin="round" stroke-linecap="round"/><path d="M649.6 564.6 L650.8 569.0 L651.9 572.9 L656.0 577.5 L659.0 580.0 L670.1 580.5 L659.0 581.0 L651.5 582.5 L658.0 584.0 L662.5 587.3 L664.0 592.7 L656.5 594.6 L664.0 596.0 L667.9 601.0 L665.6 607.1 L668.6 613.2 L672.0 617.0 L677.0 620.0 L680.0 626.8 L679.2 632.9 L672.0 635.5 L664.8 636.7" fill="none" stroke="#0a0aff" stroke-width="6.4" stroke-linejoin="round" stroke-linecap="round"/><path d="M682.3 639.0 L687.6 642.8 L689.1 651.1 L688.6 664.2" fill="none" stroke="#0a0aff" stroke-width="5.8" stroke-linejoin="round" stroke-linecap="round"/><text x="28" y="261.7856225143235" font-size="12.3" fill="#cf3a1f" text-anchor="middle" font-weight="normal" textLength="20.3" lengthAdjust="spacingAndGlyphs" >100</text><text x="28" y="380.93762285257816" font-size="12.3" fill="#cf3a1f" text-anchor="middle" font-weight="normal" textLength="20.3" lengthAdjust="spacingAndGlyphs" >200</text><text x="28" y="450.6370749363716" font-size="12.3" fill="#cf3a1f" text-anchor="middle" font-weight="normal" textLength="20.3" lengthAdjust="spacingAndGlyphs" >300</text><text x="28" y="500.08962319083275" font-size="12.3" fill="#cf3a1f" text-anchor="middle" font-weight="normal" textLength="20.3" lengthAdjust="spacingAndGlyphs" >400</text><text x="28" y="538.4479996617454" font-size="12.3" fill="#cf3a1f" text-anchor="middle" font-weight="normal" textLength="20.3" lengthAdjust="spacingAndGlyphs" >500</text><text x="28" y="569.7890752746262" font-size="12.3" fill="#cf3a1f" text-anchor="middle" font-weight="normal" textLength="20.3" lengthAdjust="spacingAndGlyphs" >600</text><text x="28" y="596.2875771369319" font-size="12.3" fill="#cf3a1f" text-anchor="middle" font-weight="normal" textLength="20.3" lengthAdjust="spacingAndGlyphs" >700</text><text x="28" y="619.2416235290874" font-size="12.3" fill="#cf3a1f" text-anchor="middle" font-weight="normal" textLength="20.3" lengthAdjust="spacingAndGlyphs" >800</text><text x="28" y="639.4885273584197" font-size="12.3" fill="#cf3a1f" text-anchor="middle" font-weight="normal" textLength="20.3" lengthAdjust="spacingAndGlyphs" >900</text><text x="22.5" y="657.6" font-size="12.3" fill="#cf3a1f" text-anchor="middle" font-weight="normal" textLength="27.5" lengthAdjust="spacingAndGlyphs" >1000</text><text x="452.5" y="112.6" font-size="12.1" fill="#1212f6" text-anchor="middle" font-weight="normal" textLength="491" lengthAdjust="spacingAndGlyphs" >D20120926_165838_P.3 102015037 NASA HS3 2012, Global Hawk, NASA 872 (AV-6)</text><text x="452" y="119.8" font-size="12.1" fill="#1212f6" text-anchor="middle" font-weight="normal" textLength="118" lengthAdjust="spacingAndGlyphs" >N35.0000 W33.7123</text><text x="174" y="137.8" font-size="12.1" fill="#111" text-anchor="middle" font-weight="normal" textLength="21" lengthAdjust="spacingAndGlyphs" >−50</text><text x="200" y="137.8" font-size="12.1" fill="#111" text-anchor="middle" font-weight="normal" textLength="21" lengthAdjust="spacingAndGlyphs" >−40</text><text x="224.5" y="137.8" font-size="12.1" fill="#111" text-anchor="middle" font-weight="normal" textLength="21" lengthAdjust="spacingAndGlyphs" >−30</text><text x="250" y="137.8" font-size="12.1" fill="#111" text-anchor="middle" font-weight="normal" textLength="21" lengthAdjust="spacingAndGlyphs" >−20</text><text x="275" y="137.8" font-size="12.1" fill="#111" text-anchor="middle" font-weight="normal" textLength="21" lengthAdjust="spacingAndGlyphs" >−10</text><text x="299.5" y="137.8" font-size="12.1" fill="#111" text-anchor="middle" font-weight="normal" textLength="7" lengthAdjust="spacingAndGlyphs" >0</text><text x="324.5" y="137.8" font-size="12.1" fill="#111" text-anchor="middle" font-weight="normal" textLength="13.5" lengthAdjust="spacingAndGlyphs" >10</text><text x="349.5" y="137.8" font-size="12.1" fill="#111" text-anchor="middle" font-weight="normal" textLength="13.5" lengthAdjust="spacingAndGlyphs" >20</text><text x="374.5" y="137.8" font-size="12.1" fill="#111" text-anchor="middle" font-weight="normal" textLength="13.5" lengthAdjust="spacingAndGlyphs" >30</text><text x="399" y="137.8" font-size="12.1" fill="#111" text-anchor="middle" font-weight="normal" textLength="13.5" lengthAdjust="spacingAndGlyphs" >40</text><text x="424" y="137.8" font-size="12.1" fill="#111" text-anchor="middle" font-weight="normal" textLength="13.5" lengthAdjust="spacingAndGlyphs" >50</text><text x="449" y="137.8" font-size="12.1" fill="#111" text-anchor="middle" font-weight="normal" textLength="13.5" lengthAdjust="spacingAndGlyphs" >60</text><text x="474" y="137.8" font-size="12.1" fill="#111" text-anchor="middle" font-weight="normal" textLength="13.5" lengthAdjust="spacingAndGlyphs" >70</text><text x="498.5" y="137.8" font-size="12.1" fill="#111" text-anchor="middle" font-weight="normal" textLength="13.5" lengthAdjust="spacingAndGlyphs" >80</text><text x="523.5" y="137.8" font-size="12.1" fill="#111" text-anchor="middle" font-weight="normal" textLength="13.5" lengthAdjust="spacingAndGlyphs" >90</text><text x="549" y="137.8" font-size="12.1" fill="#111" text-anchor="middle" font-weight="normal" textLength="20.5" lengthAdjust="spacingAndGlyphs" >100</text><text x="574" y="137.8" font-size="12.1" fill="#111" text-anchor="middle" font-weight="normal" textLength="20.5" lengthAdjust="spacingAndGlyphs" >110</text><text x="599" y="137.8" font-size="12.1" fill="#111" text-anchor="middle" font-weight="normal" textLength="20.5" lengthAdjust="spacingAndGlyphs" >120</text><text x="624" y="137.8" font-size="12.1" fill="#111" text-anchor="middle" font-weight="normal" textLength="20.5" lengthAdjust="spacingAndGlyphs" >130</text><text x="649" y="137.8" font-size="12.1" fill="#111" text-anchor="middle" font-weight="normal" textLength="20.5" lengthAdjust="spacingAndGlyphs" >140</text><text x="674" y="137.8" font-size="12.1" fill="#111" text-anchor="middle" font-weight="normal" textLength="20.5" lengthAdjust="spacingAndGlyphs" >150</text><text x="699" y="137.8" font-size="12.1" fill="#111" text-anchor="middle" font-weight="normal" textLength="20.5" lengthAdjust="spacingAndGlyphs" >160</text><text x="724" y="137.8" font-size="12.1" fill="#111" text-anchor="middle" font-weight="normal" textLength="20.5" lengthAdjust="spacingAndGlyphs" >170</text><text x="749" y="137.8" font-size="12.1" fill="#111" text-anchor="middle" font-weight="normal" textLength="20.5" lengthAdjust="spacingAndGlyphs" >180</text><text x="774" y="137.8" font-size="12.1" fill="#111" text-anchor="middle" font-weight="normal" textLength="20.5" lengthAdjust="spacingAndGlyphs" >190</text><text x="798.5" y="137.8" font-size="12.1" fill="#111" text-anchor="middle" font-weight="normal" textLength="20.5" lengthAdjust="spacingAndGlyphs" >200</text><text x="62" y="152.2" font-size="12.1" fill="#1212f6" text-anchor="middle" font-weight="normal" textLength="28" lengthAdjust="spacingAndGlyphs" >−190</text><text x="91" y="176.2" font-size="12.1" fill="#1212f6" text-anchor="middle" font-weight="normal" textLength="28" lengthAdjust="spacingAndGlyphs" >−180</text><text x="120.5" y="199.7" font-size="12.1" fill="#1212f6" text-anchor="middle" font-weight="normal" textLength="28" lengthAdjust="spacingAndGlyphs" >−170</text><text x="150.5" y="223.2" font-size="12.1" fill="#1212f6" text-anchor="middle" font-weight="normal" textLength="28" lengthAdjust="spacingAndGlyphs" >−160</text><text x="180" y="246.7" font-size="12.1" fill="#1212f6" text-anchor="middle" font-weight="normal" textLength="28" lengthAdjust="spacingAndGlyphs" >−150</text><text x="210" y="270.2" font-size="12.1" fill="#1212f6" text-anchor="middle" font-weight="normal" textLength="28" lengthAdjust="spacingAndGlyphs" >−140</text><text x="240" y="293.7" font-size="12.1" fill="#1212f6" text-anchor="middle" font-weight="normal" textLength="28" lengthAdjust="spacingAndGlyphs" >−130</text><text x="269.5" y="317.2" font-size="12.1" fill="#1212f6" text-anchor="middle" font-weight="normal" textLength="28" lengthAdjust="spacingAndGlyphs" >−120</text><text x="299" y="341.2" font-size="12.1" fill="#1212f6" text-anchor="middle" font-weight="normal" textLength="28" lengthAdjust="spacingAndGlyphs" >−110</text><text x="328" y="364.7" font-size="12.1" fill="#1212f6" text-anchor="middle" font-weight="normal" textLength="28" lengthAdjust="spacingAndGlyphs" >−100</text><text x="367" y="388.5" font-size="12.1" fill="#1212f6" text-anchor="middle" font-weight="normal" textLength="21" lengthAdjust="spacingAndGlyphs" >−90</text><text x="410" y="399.5" font-size="12.1" fill="#1212f6" text-anchor="middle" font-weight="normal" textLength="21" lengthAdjust="spacingAndGlyphs" >−80</text><text x="466" y="402.2" font-size="12.1" fill="#1212f6" text-anchor="middle" font-weight="normal" textLength="21" lengthAdjust="spacingAndGlyphs" >−70</text><text x="496" y="425.7" font-size="12.1" fill="#1212f6" text-anchor="middle" font-weight="normal" textLength="21" lengthAdjust="spacingAndGlyphs" >−60</text><text x="524.5" y="449.2" font-size="12.1" fill="#1212f6" text-anchor="middle" font-weight="normal" textLength="21" lengthAdjust="spacingAndGlyphs" >−50</text><text x="554.5" y="472.7" font-size="12.1" fill="#1212f6" text-anchor="middle" font-weight="normal" textLength="21" lengthAdjust="spacingAndGlyphs" >−40</text><text x="586" y="496.2" font-size="12.1" fill="#1212f6" text-anchor="middle" font-weight="normal" textLength="21" lengthAdjust="spacingAndGlyphs" >−30</text><text x="616" y="520.2" font-size="12.1" fill="#1212f6" text-anchor="middle" font-weight="normal" textLength="21" lengthAdjust="spacingAndGlyphs" >−20</text><text x="646" y="544.2" font-size="12.1" fill="#1212f6" text-anchor="middle" font-weight="normal" textLength="21" lengthAdjust="spacingAndGlyphs" >−10</text><text x="686" y="567.7" font-size="12.1" fill="#1212f6" text-anchor="middle" font-weight="normal" textLength="7" lengthAdjust="spacingAndGlyphs" >0</text><text x="709" y="591.2" font-size="12.1" fill="#1212f6" text-anchor="middle" font-weight="normal" textLength="13.5" lengthAdjust="spacingAndGlyphs" >10</text><text x="738.5" y="614.2" font-size="12.1" fill="#1212f6" text-anchor="middle" font-weight="normal" textLength="13.5" lengthAdjust="spacingAndGlyphs" >20</text><text x="768" y="637.7" font-size="12.1" fill="#1212f6" text-anchor="middle" font-weight="normal" textLength="13.5" lengthAdjust="spacingAndGlyphs" >30</text><text x="191.2" y="376.2" font-size="12.1" fill="#557f17" text-anchor="middle" font-weight="normal" textLength="20" lengthAdjust="spacingAndGlyphs" >−40</text><text x="210.7" y="376.2" font-size="12.1" fill="#557f17" text-anchor="middle" font-weight="normal" textLength="20" lengthAdjust="spacingAndGlyphs" >−35</text><text x="230.8" y="376.2" font-size="12.1" fill="#557f17" text-anchor="middle" font-weight="normal" textLength="20" lengthAdjust="spacingAndGlyphs" >−30</text><text x="251" y="376.2" font-size="12.1" fill="#557f17" text-anchor="middle" font-weight="normal" textLength="20" lengthAdjust="spacingAndGlyphs" >−25</text><text x="272.4" y="376.2" font-size="12.1" fill="#557f17" text-anchor="middle" font-weight="normal" textLength="20" lengthAdjust="spacingAndGlyphs" >−20</text><text x="296" y="376.2" font-size="12.1" fill="#557f17" text-anchor="middle" font-weight="normal" textLength="20" lengthAdjust="spacingAndGlyphs" >−15</text><text x="320" y="376.2" font-size="12.1" fill="#557f17" text-anchor="middle" font-weight="normal" textLength="20" lengthAdjust="spacingAndGlyphs" >−10</text><text x="349.5" y="376.2" font-size="12.1" fill="#557f17" text-anchor="middle" font-weight="normal" textLength="13.5" lengthAdjust="spacingAndGlyphs" >−5</text><text x="382.5" y="376.2" font-size="12.1" fill="#557f17" text-anchor="middle" font-weight="normal" textLength="7" lengthAdjust="spacingAndGlyphs" >0</text><text x="418" y="376.2" font-size="12.1" fill="#557f17" text-anchor="middle" font-weight="normal" textLength="7" lengthAdjust="spacingAndGlyphs" >5</text><text x="459" y="376.2" font-size="12.1" fill="#557f17" text-anchor="middle" font-weight="normal" textLength="13.5" lengthAdjust="spacingAndGlyphs" >10</text><text x="511" y="376.2" font-size="12.1" fill="#557f17" text-anchor="middle" font-weight="normal" textLength="13.5" lengthAdjust="spacingAndGlyphs" >15</text><text x="573.5" y="376.2" font-size="12.1" fill="#557f17" text-anchor="middle" font-weight="normal" textLength="13.5" lengthAdjust="spacingAndGlyphs" >20</text><text x="651.5" y="376.2" font-size="12.1" fill="#557f17" text-anchor="middle" font-weight="normal" textLength="13.5" lengthAdjust="spacingAndGlyphs" >25</text><text x="742.5" y="376.2" font-size="12.1" fill="#557f17" text-anchor="middle" font-weight="normal" textLength="13.5" lengthAdjust="spacingAndGlyphs" >30</text><text x="814.5" y="567.5" font-size="12.1" fill="#557f17" text-anchor="middle" font-weight="normal" textLength="13.5" lengthAdjust="spacingAndGlyphs" >35</text><text x="314.5" y="661.5" font-size="12.1" fill="#8b8b8b" text-anchor="middle" font-weight="normal" textLength="17" lengthAdjust="spacingAndGlyphs" >0.1</text><text x="354.5" y="661.5" font-size="12.1" fill="#8b8b8b" text-anchor="middle" font-weight="normal" textLength="17" lengthAdjust="spacingAndGlyphs" >0.2</text><text x="397.5" y="661.5" font-size="12.1" fill="#8b8b8b" text-anchor="middle" font-weight="normal" textLength="17" lengthAdjust="spacingAndGlyphs" >0.4</text><text x="469.5" y="661.5" font-size="12.1" fill="#8b8b8b" text-anchor="middle" font-weight="normal" textLength="7" lengthAdjust="spacingAndGlyphs" >1</text><text x="522" y="661.5" font-size="12.1" fill="#8b8b8b" text-anchor="middle" font-weight="normal" textLength="7" lengthAdjust="spacingAndGlyphs" >2</text><text x="552.5" y="661.5" font-size="12.1" fill="#8b8b8b" text-anchor="middle" font-weight="normal" textLength="7" lengthAdjust="spacingAndGlyphs" >3</text><text x="594" y="661.5" font-size="12.1" fill="#8b8b8b" text-anchor="middle" font-weight="normal" textLength="7" lengthAdjust="spacingAndGlyphs" >5</text><text x="634" y="661.5" font-size="12.1" fill="#8b8b8b" text-anchor="middle" font-weight="normal" textLength="7" lengthAdjust="spacingAndGlyphs" >8</text><text x="663.5" y="661.5" font-size="12.1" fill="#8b8b8b" text-anchor="middle" font-weight="normal" textLength="13.5" lengthAdjust="spacingAndGlyphs" >12</text><text x="690" y="661.5" font-size="12.1" fill="#8b8b8b" text-anchor="middle" font-weight="normal" textLength="13.5" lengthAdjust="spacingAndGlyphs" >16</text><text x="711.5" y="661.5" font-size="12.1" fill="#8b8b8b" text-anchor="middle" font-weight="normal" textLength="13.5" lengthAdjust="spacingAndGlyphs" >20</text><text x="751" y="661.5" font-size="12.1" fill="#8b8b8b" text-anchor="middle" font-weight="normal" textLength="13.5" lengthAdjust="spacingAndGlyphs" >30</text><text x="780" y="661.5" font-size="12.1" fill="#8b8b8b" text-anchor="middle" font-weight="normal" textLength="13.5" lengthAdjust="spacingAndGlyphs" >40</text><text x="7.5" y="699.5" font-size="12.1" fill="#111" text-anchor="start" font-weight="normal" textLength="204" lengthAdjust="spacingAndGlyphs" style="white-space:pre">Aspen 3.1, 26 Sep 2012  17:46 UTC</text><path d="M858.7 235.9 L876.8 265.4 L879.6 264.0" fill="none" stroke="#2a2af0" stroke-width="1" /><rect x="856.5" y="233.70000000000002" width="4.4" height="4.4" rx="1" fill="#2a2af0"/><path d="M858.7 277.1 L824.7 290.2" fill="none" stroke="#2a2af0" stroke-width="1" /><rect x="856.5" y="274.90000000000003" width="4.4" height="4.4" rx="1" fill="#2a2af0"/><path d="M858.7 303.0 L893.0 300.8 L895.0 309.7" fill="none" stroke="#2a2af0" stroke-width="1" /><rect x="856.5" y="300.8" width="4.4" height="4.4" rx="1" fill="#2a2af0"/><path d="M858.7 329.2 L890.8 316.7 L893.0 321.7" fill="none" stroke="#2a2af0" stroke-width="1" /><rect x="856.5" y="327.0" width="4.4" height="4.4" rx="1" fill="#2a2af0"/><path d="M858.7 355.6 L890.2 371.8 L886.0 380.0" fill="none" stroke="#2a2af0" stroke-width="1" /><rect x="856.5" y="353.40000000000003" width="4.4" height="4.4" rx="1" fill="#2a2af0"/><path d="M887.2 370.2 L883.0 378.4" fill="none" stroke="#2a2af0" stroke-width="1" /><path d="M858.7 381.5 L883.2 357.9 L891.6 364.8" fill="none" stroke="#2a2af0" stroke-width="1" /><rect x="856.5" y="379.3" width="4.4" height="4.4" rx="1" fill="#2a2af0"/><path d="M880.8 360.3 L889.2 367.2" fill="none" stroke="#2a2af0" stroke-width="1" /><path d="M858.7 407.4 L881.9 384.3 L890.8 389.4" fill="none" stroke="#2a2af0" stroke-width="1" /><rect x="856.5" y="405.2" width="4.4" height="4.4" rx="1" fill="#2a2af0"/><path d="M858.7 433.6 L876.3 403.3 L884.6 406.6" fill="none" stroke="#2a2af0" stroke-width="1" /><rect x="856.5" y="431.40000000000003" width="4.4" height="4.4" rx="1" fill="#2a2af0"/><path d="M874.6 406.2 L879.6 408.2" fill="none" stroke="#2a2af0" stroke-width="1" /><path d="M858.7 459.8 L889.7 442.8 L893.6 449.8" fill="none" stroke="#2a2af0" stroke-width="1" /><rect x="856.5" y="457.6" width="4.4" height="4.4" rx="1" fill="#2a2af0"/><path d="M858.7 485.7 L890.2 472.4 L894.4 480.4" fill="none" stroke="#2a2af0" stroke-width="1" /><rect x="856.5" y="483.5" width="4.4" height="4.4" rx="1" fill="#2a2af0"/><path d="M887.1 473.7 L889.2 477.7" fill="none" stroke="#2a2af0" stroke-width="1" /><path d="M858.7 510.8 L893.8 509.7 L894.4 519.4" fill="none" stroke="#2a2af0" stroke-width="1" /><rect x="856.5" y="508.6" width="4.4" height="4.4" rx="1" fill="#2a2af0"/><path d="M890.4 509.8 L891.0 519.5" fill="none" stroke="#2a2af0" stroke-width="1" /><path d="M858.7 537.0 L883.2 514.2 L890.8 519.7" fill="none" stroke="#2a2af0" stroke-width="1" /><rect x="856.5" y="534.8" width="4.4" height="4.4" rx="1" fill="#2a2af0"/><path d="M880.7 516.5 L888.3 522.0" fill="none" stroke="#2a2af0" stroke-width="1" /><path d="M858.7 559.3 L883.2 537.0 L891.6 543.1" fill="none" stroke="#2a2af0" stroke-width="1" /><rect x="856.5" y="557.0999999999999" width="4.4" height="4.4" rx="1" fill="#2a2af0"/><path d="M880.7 539.3 L889.1 545.4" fill="none" stroke="#2a2af0" stroke-width="1" /><path d="M858.7 588.0 L878.5 560.1 L886.9 565.7" fill="none" stroke="#2a2af0" stroke-width="1" /><rect x="856.5" y="585.8" width="4.4" height="4.4" rx="1" fill="#2a2af0"/><path d="M876.5 562.9 L884.9 568.5" fill="none" stroke="#2a2af0" stroke-width="1" /><path d="M858.7 614.2 L879.6 586.6 L887.4 591.9" fill="none" stroke="#2a2af0" stroke-width="1" /><rect x="856.5" y="612.0" width="4.4" height="4.4" rx="1" fill="#2a2af0"/><path d="M877.5 589.3 L885.3 594.6" fill="none" stroke="#2a2af0" stroke-width="1" /><path d="M858.7 627.0 L884.6 604.4 L891.6 611.6" fill="none" stroke="#2a2af0" stroke-width="1" /><rect x="856.5" y="624.8" width="4.4" height="4.4" rx="1" fill="#2a2af0"/>
<rect x="857" y="8" width="46" height="782" fill="url(#shadowL)"/><rect x="895" y="0" width="8" height="8" fill="#000"/><rect x="903" y="0" width="791" height="40" fill="url(#rgTool)"/><rect x="903" y="40" width="791" height="22" fill="url(#rgTab)"/><rect x="903" y="61.5" width="791" height="1.2" fill="#6e6e6e"/><rect x="903" y="62.7" width="791" height="675.8" fill="#fff"/><path d="M903 738 H1694 V750 Q1694 754 1690 754 H907 Q903 754 903 750 Z" fill="url(#rgStat)"/><rect x="903" y="737.6" width="791" height="1.1" fill="#6a6a6a"/><rect x="903" y="738.7" width="791" height="1" fill="#d9d9d9"/><rect x="902.5" y="0" width="0.9" height="752" fill="#6c6c6c" opacity="0.85"/><path d="M903 40.5 H909 Q912.5 40.5 912.7 44 L913.8 57 Q914.2 61 918 61 H903 Z" fill="#a5a5a5" stroke="#8c8c8c" stroke-width="0.8"/><path d="M1694 40.5 H1667 Q1663.4 40.5 1663 44.5 L1661.8 57 Q1661.4 61 1657.5 61 H1694 Z" fill="#a9a9a9" stroke="#8c8c8c" stroke-width="0.8"/><path d="M1673.8 50.8 H1681.8 M1677.8 46.8 V54.8" stroke="#3c3c3c" stroke-width="1.6"/><circle cx="916.8" cy="-1.4" r="6" fill="url(#tlR)" stroke="#9c2a20" stroke-width="0.7"/><circle cx="937" cy="-1.4" r="6" fill="url(#tlY)" stroke="#a6771a" stroke-width="0.7"/><circle cx="957" cy="-1.4" r="6" fill="url(#tlG)" stroke="#4a8427" stroke-width="0.7"/><text x="1297" y="4.3" font-size="13" fill="#3a3a3a" text-anchor="middle" font-weight="normal" textLength="570" lengthAdjust="spacingAndGlyphs" >nldr_skewt_TIME19000101T165920_LON-33.613682_LAT35.020809.png 948×894 pixels</text><path d="M1676.2 0 H1682.8 V5.4 H1679.8 L1676.2 1.6 Z" fill="#8a8a8a"/><rect x="912.0" y="12.5" width="47.5" height="20.5" rx="3.5" fill="url(#rgBtn)" stroke="#8b8b8b"/><rect x="968.5" y="12.5" width="27" height="20.5" rx="3.5" fill="url(#rgBtn)" stroke="#8b8b8b"/><rect x="1004.5" y="12.5" width="27" height="20.5" rx="3.5" fill="url(#rgBtn)" stroke="#8b8b8b"/><rect x="1040.5" y="12.5" width="27" height="20.5" rx="3.5" fill="url(#rgBtn)" stroke="#8b8b8b"/><line x1="935.4000000000001" y1="14.5" x2="935.4000000000001" y2="30.5" stroke="#9c9c9c" stroke-width="0.7" opacity="0.7"/><path d="M919.7 22.8 L927.7 18.5 L927.7 27.1 Z" fill="#9c9c9c"/><path d="M951.0 22.8 L943.0 18.5 L943.0 27.1 Z" fill="#9c9c9c"/><path d="M975.0 23.1 L982.0 16.5 L989.0 23.1" fill="none" stroke="#3e3e3e" stroke-width="1.7" stroke-linejoin="miter"/><path d="M977.4 22.2 L977.4 27.8 L986.6 27.8 L986.6 22.2" fill="none" stroke="#3e3e3e" stroke-width="1.6"/><rect x="980.7" y="23.8" width="2.6" height="3" fill="none" stroke="#3e3e3e" stroke-width="0.8"/><rect x="984.6" y="16.200000000000003" width="1.7" height="2.5" fill="#3e3e3e"/><path d="M1013.0 22.8 H1023.0 M1018.0 17.8 V27.8" stroke="#3e3e3e" stroke-width="1.8" fill="none"/><path d="M1045.4 19.2 H1047.4 Q1048.7 19.2 1048.7 20.8 V25.0 Q1048.7 26.8 1050.5 26.8 H1057.3000000000002 Q1059.1000000000001 26.8 1059.1000000000001 25.0 V20.8 Q1059.1000000000001 19.2 1060.4 19.2 H1062.4" fill="none" stroke="#3e3e3e" stroke-width="1.6"/><path d="M1053.9 20.2 L1055.9 22.400000000000002 L1053.9 24.6 L1051.9 22.400000000000002 Z" fill="#3e3e3e"/><rect x="1076.5" y="12.5" width="572.5" height="20.5" rx="3.5" fill="url(#rgBtn)" stroke="#8b8b8b"/><path d="M1080 12.5 H1585.5 V33 H1080 Q1076.5 33 1076.5 29.5 V16 Q1076.5 12.5 1080 12.5 Z" fill="#fff" stroke="#6f94c8" stroke-width="1"/><path d="M1081 12.6 H1585 V33 H1081 Q1077.4 33 1077.4 29.4 V16.2 Q1077.4 12.6 1081 12.6 Z" fill="none" stroke="#7d9fd2" stroke-width="2.4" opacity="0.95"/><rect x="1102" y="15" width="457" height="15.8" fill="#bdd4fb"/><text x="1102.8" y="27.7" font-size="12.8" fill="#000" text-anchor="start" font-weight="normal" textLength="454" lengthAdjust="spacingAndGlyphs" >shis.ssec.wisc.edu/recent/kml/images/rdr20120926T163420sdr20120926T1</text><radialGradient id="globeG" cx="0.55" cy="0.68" r="0.75"><stop offset="0" stop-color="#d4ecff"/><stop offset="0.45" stop-color="#6a9fe8"/><stop offset="0.85" stop-color="#2b56c0"/><stop offset="1" stop-color="#213f98"/></radialGradient><circle cx="1089" cy="23" r="6.9" fill="url(#globeG)"/><path d="M1088 18.5 Q1090 17.5 1091.5 18.3 Q1090 20.5 1088.8 22.6 Q1087.5 21 1088 18.5Z" fill="#a9cdf7" opacity="0.9"/><path d="M1089.2 24 Q1092.2 22.6 1093.4 25 Q1092.6 27.8 1090 28.3 Q1088.6 26 1089.2 24Z" fill="#f2fbff" opacity="0.95"/><path d="M1577.3 22.3 A4.6 4.6 0 1 1 1574 18.7" fill="none" stroke="#555" stroke-width="1.6"/><path d="M1573 15.7 L1577.7 18.5 L1573.3 21.3 Z" fill="#555"/><text x="1617.5" y="27.6" font-size="13" fill="#a9a9a9" text-anchor="middle" font-weight="normal" textLength="43" lengthAdjust="spacingAndGlyphs" >Reader</text><rect x="1658.5" y="12.5" width="27" height="20.5" rx="3.5" fill="url(#rgBtn)" stroke="#8b8b8b"/><circle cx="1671.9" cy="22.8" r="6.9" fill="#5e5e5e"/><path d="M1669.6 18.1 H1674 V22.1 H1677 L1671.8 27.3 L1666.6 22.1 H1669.6 Z" fill="#e6e6e6"/><text x="1285.5" y="54.7" font-size="11" fill="#3d3d3d" text-anchor="middle" font-weight="bold" textLength="507" lengthAdjust="spacingAndGlyphs" >nldr_skewt_TIME19000101T165920_LON-33.613682_LAT35.020809.png 948×894 pixels</text>
<clipPath id="rcClip"><rect x="993.3" y="130.25" width="553.4000000000001" height="540.4499999999999"/></clipPath><g clip-path="url(#rcClip)"><line x1="999.3" y1="253.5" x2="1546.7" y2="253.5" stroke="#2c2c2c" stroke-width="1.35" stroke-dasharray="0.6 5.43" stroke-linecap="round"/><line x1="999.3" y1="376.3" x2="1546.7" y2="376.3" stroke="#2c2c2c" stroke-width="1.35" stroke-dasharray="0.6 5.43" stroke-linecap="round"/><line x1="999.3" y1="448.2" x2="1546.7" y2="448.2" stroke="#2c2c2c" stroke-width="1.35" stroke-dasharray="0.6 5.43" stroke-linecap="round"/><line x1="999.3" y1="499.2" x2="1546.7" y2="499.2" stroke="#2c2c2c" stroke-width="1.35" stroke-dasharray="0.6 5.43" stroke-linecap="round"/><line x1="999.3" y1="538.8" x2="1546.7" y2="538.8" stroke="#2c2c2c" stroke-width="1.35" stroke-dasharray="0.6 5.43" stroke-linecap="round"/><line x1="999.3" y1="571.1" x2="1546.7" y2="571.1" stroke="#2c2c2c" stroke-width="1.35" stroke-dasharray="0.6 5.43" stroke-linecap="round"/><line x1="999.3" y1="598.5" x2="1546.7" y2="598.5" stroke="#2c2c2c" stroke-width="1.35" stroke-dasharray="0.6 5.43" stroke-linecap="round"/><line x1="999.3" y1="622.1" x2="1546.7" y2="622.1" stroke="#2c2c2c" stroke-width="1.35" stroke-dasharray="0.6 5.43" stroke-linecap="round"/><line x1="999.3" y1="643.0" x2="1546.7" y2="643.0" stroke="#2c2c2c" stroke-width="1.35" stroke-dasharray="0.6 5.43" stroke-linecap="round"/><line x1="999.3" y1="661.7" x2="1546.7" y2="661.7" stroke="#2c2c2c" stroke-width="1.35" stroke-dasharray="0.6 5.43" stroke-linecap="round"/><line x1="732.9" y1="670.4" x2="1271.0" y2="132.25" stroke="#2c2c2c" stroke-width="1.35" stroke-dasharray="0.5 5.6" stroke-linecap="round"/><line x1="798.0" y1="670.4" x2="1336.2" y2="132.25" stroke="#2c2c2c" stroke-width="1.35" stroke-dasharray="0.5 5.6" stroke-linecap="round"/><line x1="863.2" y1="670.4" x2="1401.3" y2="132.25" stroke="#2c2c2c" stroke-width="1.35" stroke-dasharray="0.5 5.6" stroke-linecap="round"/><line x1="928.3" y1="670.4" x2="1466.5" y2="132.25" stroke="#2c2c2c" stroke-width="1.35" stroke-dasharray="0.5 5.6" stroke-linecap="round"/><line x1="993.5" y1="670.4" x2="1531.7" y2="132.25" stroke="#2c2c2c" stroke-width="1.35" stroke-dasharray="0.5 5.6" stroke-linecap="round"/><line x1="1058.6" y1="670.4" x2="1596.8" y2="132.25" stroke="#2c2c2c" stroke-width="1.35" stroke-dasharray="0.5 5.6" stroke-linecap="round"/><line x1="1123.8" y1="670.4" x2="1661.9" y2="132.25" stroke="#2c2c2c" stroke-width="1.35" stroke-dasharray="0.5 5.6" stroke-linecap="round"/><line x1="1188.9" y1="670.4" x2="1727.1" y2="132.25" stroke="#2c2c2c" stroke-width="1.35" stroke-dasharray="0.5 5.6" stroke-linecap="round"/><line x1="1254.1" y1="670.4" x2="1792.2" y2="132.25" stroke="#2c2c2c" stroke-width="1.35" stroke-dasharray="0.5 5.6" stroke-linecap="round"/><line x1="1319.2" y1="670.4" x2="1857.4" y2="132.25" stroke="#2c2c2c" stroke-width="1.35" stroke-dasharray="0.5 5.6" stroke-linecap="round"/><line x1="1384.4" y1="670.4" x2="1922.5" y2="132.25" stroke="#2c2c2c" stroke-width="1.35" stroke-dasharray="0.5 5.6" stroke-linecap="round"/><line x1="1449.5" y1="670.4" x2="1987.7" y2="132.25" stroke="#2c2c2c" stroke-width="1.35" stroke-dasharray="0.5 5.6" stroke-linecap="round"/><line x1="1514.7" y1="670.4" x2="2052.8" y2="132.25" stroke="#2c2c2c" stroke-width="1.35" stroke-dasharray="0.5 5.6" stroke-linecap="round"/><path d="M1014.9 670.4 L1007.2 665.1 L999.6 659.9 L992.2 654.7 L984.8 649.5 L977.6 644.3 L970.5 639.1 L963.4 633.9 L956.5 628.7 L949.7 623.4 L942.9 618.2 L936.3 613.0 L929.8 607.8 L923.3 602.6 L917.0 597.4 L910.7 592.2 L904.6 587.0 L898.6 581.8 L892.6 576.5 L886.7 571.3 L881.0 566.1 L875.3 560.9 L869.7 555.7 L864.2 550.5 L858.8 545.3 L853.5 540.1 L848.2 534.9 L843.1 529.6 L838.1 524.4 L833.1 519.2 L828.2 514.0 L823.4 508.8 L818.7 503.6 L814.0 498.4 L809.5 493.2 L805.0 488.0 L800.6 482.7 L796.3 477.5 L792.1 472.3 L787.9 467.1 L783.9 461.9 L779.9 456.7 L776.0 451.5 L772.1 446.3 L768.4 441.1 L764.7 435.8 L761.0 430.6 L757.5 425.4 L754.0 420.2 L750.6 415.0 L747.3 409.8 L744.1 404.6 L740.9 399.4 L737.8 394.2 L734.7 388.9 L731.8 383.7 L728.9 378.5 L726.0 373.3 L723.2 368.1 L720.5 362.9 L717.9 357.7 L715.3 352.5 L712.8 347.3 L710.4 342.0 L708.0 336.8 L705.7 331.6 L703.4 326.4 L701.3 321.2 L699.1 316.0 L697.1 310.8 L695.1 305.6 L693.1 300.4 L691.2 295.1 L689.4 289.9 L687.6 284.7 L685.9 279.5 L684.3 274.3 L682.7 269.1 L681.2 263.9 L679.7 258.7 L678.2 253.5" fill="none" stroke="#e8897b" stroke-width="1.8" stroke-dasharray="9.6 8.5" stroke-dashoffset="2.0"/><path d="M1080.9 670.4 L1072.7 665.1 L1064.6 659.9 L1056.6 654.7 L1048.7 649.5 L1040.9 644.3 L1033.3 639.1 L1025.7 633.9 L1018.3 628.7 L1010.9 623.4 L1003.7 618.2 L996.5 613.0 L989.5 607.8 L982.6 602.6 L975.7 597.4 L969.0 592.2 L962.4 587.0 L955.8 581.8 L949.4 576.5 L943.1 571.3 L936.8 566.1 L930.7 560.9 L924.6 555.7 L918.7 550.5 L912.8 545.3 L907.0 540.1 L901.4 534.9 L895.8 529.6 L890.3 524.4 L884.9 519.2 L879.5 514.0 L874.3 508.8 L869.2 503.6 L864.1 498.4 L859.1 493.2 L854.3 488.0 L849.5 482.7 L844.7 477.5 L840.1 472.3 L835.6 467.1 L831.1 461.9 L826.7 456.7 L822.4 451.5 L818.2 446.3 L814.0 441.1 L809.9 435.8 L805.9 430.6 L802.0 425.4 L798.2 420.2 L794.4 415.0 L790.7 409.8 L787.1 404.6 L783.6 399.4 L780.1 394.2 L776.7 388.9 L773.4 383.7 L770.1 378.5 L766.9 373.3 L763.8 368.1 L760.8 362.9 L757.8 357.7 L754.9 352.5 L752.1 347.3 L749.3 342.0 L746.6 336.8 L744.0 331.6 L741.4 326.4 L738.9 321.2 L736.5 316.0 L734.1 310.8 L731.8 305.6 L729.5 300.4 L727.3 295.1 L725.2 289.9 L723.1 284.7 L721.1 279.5 L719.2 274.3 L717.3 269.1 L715.5 263.9 L713.7 258.7 L712.0 253.5" fill="none" stroke="#e8897b" stroke-width="1.8" stroke-dasharray="9.6 8.5" stroke-dashoffset="15.0"/><path d="M1147.0 670.4 L1138.2 665.1 L1129.6 659.9 L1121.0 654.7 L1112.6 649.5 L1104.3 644.3 L1096.1 639.1 L1088.0 633.9 L1080.0 628.7 L1072.2 623.4 L1064.4 618.2 L1056.8 613.0 L1049.2 607.8 L1041.8 602.6 L1034.5 597.4 L1027.2 592.2 L1020.1 587.0 L1013.1 581.8 L1006.2 576.5 L999.4 571.3 L992.7 566.1 L986.1 560.9 L979.5 555.7 L973.1 550.5 L966.8 545.3 L960.6 540.1 L954.5 534.9 L948.4 529.6 L942.5 524.4 L936.7 519.2 L930.9 514.0 L925.2 508.8 L919.7 503.6 L914.2 498.4 L908.8 493.2 L903.5 488.0 L898.3 482.7 L893.2 477.5 L888.1 472.3 L883.2 467.1 L878.3 461.9 L873.5 456.7 L868.8 451.5 L864.2 446.3 L859.7 441.1 L855.2 435.8 L850.8 430.6 L846.5 425.4 L842.3 420.2 L838.2 415.0 L834.1 409.8 L830.2 404.6 L826.3 399.4 L822.4 394.2 L818.7 388.9 L815.0 383.7 L811.4 378.5 L807.9 373.3 L804.4 368.1 L801.0 362.9 L797.7 357.7 L794.5 352.5 L791.3 347.3 L788.2 342.0 L785.2 336.8 L782.2 331.6 L779.4 326.4 L776.5 321.2 L773.8 316.0 L771.1 310.8 L768.5 305.6 L765.9 300.4 L763.4 295.1 L761.0 289.9 L758.6 284.7 L756.3 279.5 L754.1 274.3 L751.9 269.1 L749.8 263.9 L747.7 258.7 L745.7 253.5" fill="none" stroke="#e8897b" stroke-width="1.8" stroke-dasharray="9.6 8.5" stroke-dashoffset="10.0"/><path d="M1213.1 670.4 L1203.7 665.1 L1194.5 659.9 L1185.4 654.7 L1176.5 649.5 L1167.6 644.3 L1158.9 639.1 L1150.3 633.9 L1141.8 628.7 L1133.4 623.4 L1125.2 618.2 L1117.0 613.0 L1109.0 607.8 L1101.0 602.6 L1093.2 597.4 L1085.5 592.2 L1077.9 587.0 L1070.4 581.8 L1063.0 576.5 L1055.7 571.3 L1048.5 566.1 L1041.4 560.9 L1034.5 555.7 L1027.6 550.5 L1020.8 545.3 L1014.1 540.1 L1007.6 534.9 L1001.1 529.6 L994.7 524.4 L988.4 519.2 L982.3 514.0 L976.2 508.8 L970.2 503.6 L964.3 498.4 L958.5 493.2 L952.7 488.0 L947.1 482.7 L941.6 477.5 L936.1 472.3 L930.8 467.1 L925.5 461.9 L920.3 456.7 L915.3 451.5 L910.2 446.3 L905.3 441.1 L900.5 435.8 L895.7 430.6 L891.1 425.4 L886.5 420.2 L882.0 415.0 L877.6 409.8 L873.2 404.6 L869.0 399.4 L864.8 394.2 L860.7 388.9 L856.6 383.7 L852.7 378.5 L848.8 373.3 L845.0 368.1 L841.3 362.9 L837.7 357.7 L834.1 352.5 L830.6 347.3 L827.2 342.0 L823.8 336.8 L820.5 331.6 L817.3 326.4 L814.2 321.2 L811.1 316.0 L808.1 310.8 L805.2 305.6 L802.3 300.4 L799.5 295.1 L796.8 289.9 L794.1 284.7 L791.5 279.5 L789.0 274.3 L786.5 269.1 L784.1 263.9 L781.8 258.7 L779.5 253.5" fill="none" stroke="#e8897b" stroke-width="1.8" stroke-dasharray="9.6 8.5" stroke-dashoffset="5.0"/><path d="M1279.1 670.4 L1269.3 665.1 L1259.5 659.9 L1249.9 654.7 L1240.4 649.5 L1231.0 644.3 L1221.7 639.1 L1212.6 633.9 L1203.6 628.7 L1194.7 623.4 L1185.9 618.2 L1177.2 613.0 L1168.7 607.8 L1160.3 602.6 L1151.9 597.4 L1143.7 592.2 L1135.6 587.0 L1127.7 581.8 L1119.8 576.5 L1112.0 571.3 L1104.4 566.1 L1096.8 560.9 L1089.4 555.7 L1082.0 550.5 L1074.8 545.3 L1067.7 540.1 L1060.7 534.9 L1053.8 529.6 L1046.9 524.4 L1040.2 519.2 L1033.6 514.0 L1027.1 508.8 L1020.7 503.6 L1014.3 498.4 L1008.1 493.2 L1002.0 488.0 L995.9 482.7 L990.0 477.5 L984.2 472.3 L978.4 467.1 L972.7 461.9 L967.2 456.7 L961.7 451.5 L956.3 446.3 L951.0 441.1 L945.8 435.8 L940.6 430.6 L935.6 425.4 L930.6 420.2 L925.8 415.0 L921.0 409.8 L916.3 404.6 L911.6 399.4 L907.1 394.2 L902.6 388.9 L898.3 383.7 L894.0 378.5 L889.8 373.3 L885.6 368.1 L881.6 362.9 L877.6 357.7 L873.7 352.5 L869.8 347.3 L866.1 342.0 L862.4 336.8 L858.8 331.6 L855.3 326.4 L851.8 321.2 L848.4 316.0 L845.1 310.8 L841.9 305.6 L838.7 300.4 L835.6 295.1 L832.6 289.9 L829.6 284.7 L826.7 279.5 L823.9 274.3 L821.1 269.1 L818.4 263.9 L815.8 258.7 L813.2 253.5" fill="none" stroke="#e8897b" stroke-width="1.8" stroke-dasharray="9.6 8.5" stroke-dashoffset="0.0"/><path d="M1345.2 670.4 L1334.8 665.1 L1324.5 659.9 L1314.3 654.7 L1304.2 649.5 L1294.3 644.3 L1284.5 639.1 L1274.9 633.9 L1265.3 628.7 L1255.9 623.4 L1246.6 618.2 L1237.5 613.0 L1228.4 607.8 L1219.5 602.6 L1210.7 597.4 L1202.0 592.2 L1193.4 587.0 L1184.9 581.8 L1176.6 576.5 L1168.3 571.3 L1160.2 566.1 L1152.2 560.9 L1144.3 555.7 L1136.5 550.5 L1128.8 545.3 L1121.3 540.1 L1113.8 534.9 L1106.4 529.6 L1099.2 524.4 L1092.0 519.2 L1085.0 514.0 L1078.0 508.8 L1071.2 503.6 L1064.4 498.4 L1057.8 493.2 L1051.2 488.0 L1044.8 482.7 L1038.4 477.5 L1032.2 472.3 L1026.0 467.1 L1020.0 461.9 L1014.0 456.7 L1008.1 451.5 L1002.3 446.3 L996.6 441.1 L991.0 435.8 L985.5 430.6 L980.1 425.4 L974.8 420.2 L969.5 415.0 L964.4 409.8 L959.3 404.6 L954.3 399.4 L949.4 394.2 L944.6 388.9 L939.9 383.7 L935.3 378.5 L930.7 373.3 L926.2 368.1 L921.8 362.9 L917.5 357.7 L913.2 352.5 L909.1 347.3 L905.0 342.0 L901.0 336.8 L897.1 331.6 L893.2 326.4 L889.4 321.2 L885.7 316.0 L882.1 310.8 L878.6 305.6 L875.1 300.4 L871.7 295.1 L868.3 289.9 L865.1 284.7 L861.9 279.5 L858.8 274.3 L855.7 269.1 L852.7 263.9 L849.8 258.7 L847.0 253.5" fill="none" stroke="#e8897b" stroke-width="1.8" stroke-dasharray="9.6 8.5" stroke-dashoffset="13.0"/><path d="M1411.3 670.4 L1400.3 665.1 L1389.4 659.9 L1378.7 654.7 L1368.1 649.5 L1357.7 644.3 L1347.4 639.1 L1337.2 633.9 L1327.1 628.7 L1317.2 623.4 L1307.4 618.2 L1297.7 613.0 L1288.1 607.8 L1278.7 602.6 L1269.4 597.4 L1260.2 592.2 L1251.2 587.0 L1242.2 581.8 L1233.4 576.5 L1224.7 571.3 L1216.1 566.1 L1207.6 560.9 L1199.2 555.7 L1191.0 550.5 L1182.8 545.3 L1174.8 540.1 L1166.9 534.9 L1159.1 529.6 L1151.4 524.4 L1143.8 519.2 L1136.3 514.0 L1128.9 508.8 L1121.7 503.6 L1114.5 498.4 L1107.4 493.2 L1100.5 488.0 L1093.6 482.7 L1086.8 477.5 L1080.2 472.3 L1073.6 467.1 L1067.2 461.9 L1060.8 456.7 L1054.5 451.5 L1048.4 446.3 L1042.3 441.1 L1036.3 435.8 L1030.4 430.6 L1024.6 425.4 L1018.9 420.2 L1013.3 415.0 L1007.8 409.8 L1002.4 404.6 L997.0 399.4 L991.8 394.2 L986.6 388.9 L981.5 383.7 L976.5 378.5 L971.6 373.3 L966.8 368.1 L962.1 362.9 L957.4 357.7 L952.8 352.5 L948.3 347.3 L943.9 342.0 L939.6 336.8 L935.3 331.6 L931.2 326.4 L927.1 321.2 L923.1 316.0 L919.1 310.8 L915.3 305.6 L911.5 300.4 L907.8 295.1 L904.1 289.9 L900.6 284.7 L897.1 279.5 L893.7 274.3 L890.3 269.1 L887.1 263.9 L883.9 258.7 L880.7 253.5" fill="none" stroke="#e8897b" stroke-width="1.8" stroke-dasharray="9.6 8.5" stroke-dashoffset="8.0"/><path d="M1477.3 670.4 L1465.8 665.1 L1454.4 659.9 L1443.1 654.7 L1432.0 649.5 L1421.0 644.3 L1410.2 639.1 L1399.5 633.9 L1388.9 628.7 L1378.4 623.4 L1368.1 618.2 L1357.9 613.0 L1347.9 607.8 L1337.9 602.6 L1328.1 597.4 L1318.5 592.2 L1308.9 587.0 L1299.5 581.8 L1290.2 576.5 L1281.0 571.3 L1271.9 566.1 L1263.0 560.9 L1254.1 555.7 L1245.4 550.5 L1236.8 545.3 L1228.4 540.1 L1220.0 534.9 L1211.7 529.6 L1203.6 524.4 L1195.6 519.2 L1187.7 514.0 L1179.9 508.8 L1172.2 503.6 L1164.6 498.4 L1157.1 493.2 L1149.7 488.0 L1142.4 482.7 L1135.3 477.5 L1128.2 472.3 L1121.2 467.1 L1114.4 461.9 L1107.6 456.7 L1101.0 451.5 L1094.4 446.3 L1088.0 441.1 L1081.6 435.8 L1075.3 430.6 L1069.2 425.4 L1063.1 420.2 L1057.1 415.0 L1051.2 409.8 L1045.4 404.6 L1039.7 399.4 L1034.1 394.2 L1028.6 388.9 L1023.2 383.7 L1017.8 378.5 L1012.6 373.3 L1007.4 368.1 L1002.3 362.9 L997.3 357.7 L992.4 352.5 L987.6 347.3 L982.9 342.0 L978.2 336.8 L973.6 331.6 L969.1 326.4 L964.7 321.2 L960.4 316.0 L956.1 310.8 L952.0 305.6 L947.9 300.4 L943.9 295.1 L939.9 289.9 L936.1 284.7 L932.3 279.5 L928.6 274.3 L924.9 269.1 L921.4 263.9 L917.9 258.7 L914.5 253.5" fill="none" stroke="#e8897b" stroke-width="1.8" stroke-dasharray="9.6 8.5" stroke-dashoffset="3.0"/><path d="M1543.4 670.4 L1531.3 665.1 L1519.4 659.9 L1507.6 654.7 L1495.9 649.5 L1484.4 644.3 L1473.0 639.1 L1461.8 633.9 L1450.7 628.7 L1439.7 623.4 L1428.9 618.2 L1418.2 613.0 L1407.6 607.8 L1397.2 602.6 L1386.9 597.4 L1376.7 592.2 L1366.7 587.0 L1356.8 581.8 L1347.0 576.5 L1337.3 571.3 L1327.8 566.1 L1318.4 560.9 L1309.1 555.7 L1299.9 550.5 L1290.8 545.3 L1281.9 540.1 L1273.1 534.9 L1264.4 529.6 L1255.8 524.4 L1247.4 519.2 L1239.0 514.0 L1230.8 508.8 L1222.7 503.6 L1214.6 498.4 L1206.7 493.2 L1198.9 488.0 L1191.3 482.7 L1183.7 477.5 L1176.2 472.3 L1168.9 467.1 L1161.6 461.9 L1154.5 456.7 L1147.4 451.5 L1140.5 446.3 L1133.6 441.1 L1126.9 435.8 L1120.2 430.6 L1113.7 425.4 L1107.2 420.2 L1100.9 415.0 L1094.6 409.8 L1088.5 404.6 L1082.4 399.4 L1076.4 394.2 L1070.6 388.9 L1064.8 383.7 L1059.1 378.5 L1053.5 373.3 L1048.0 368.1 L1042.6 362.9 L1037.2 357.7 L1032.0 352.5 L1026.8 347.3 L1021.8 342.0 L1016.8 336.8 L1011.9 331.6 L1007.1 326.4 L1002.4 321.2 L997.7 316.0 L993.2 310.8 L988.7 305.6 L984.3 300.4 L980.0 295.1 L975.7 289.9 L971.6 284.7 L967.5 279.5 L963.5 274.3 L959.5 269.1 L955.7 263.9 L951.9 258.7 L948.2 253.5" fill="none" stroke="#e8897b" stroke-width="1.8" stroke-dasharray="9.6 8.5" stroke-dashoffset="16.0"/><path d="M1076.6 670.4 L1084.7 656.9 L1092.9 643.4 L1101.1 629.9 L1109.3 616.4 L1117.6 602.9 L1125.9 589.4 L1134.3 575.9 L1142.6 562.4 L1151.1 548.9 L1159.5 535.4 L1168.0 521.9 L1176.6 508.4 L1185.2 494.9 L1193.8 481.4 L1202.4 467.9 L1211.1 454.4 L1219.8 440.9 L1228.6 427.4 L1237.3 413.9 L1246.2 400.5 L1255.0 387.0 L1263.9 373.5 L1272.8 360.0 L1281.8 346.5 L1290.7 333.0 L1299.8 319.5 L1308.8 306.0 L1317.9 292.5 L1327.0 279.0 L1336.1 265.5 L1345.3 252.0 L1354.5 238.5 L1363.7 225.0 L1372.9 211.5 L1382.2 198.0 L1391.5 184.5 L1400.9 171.0 L1410.2 157.5 L1419.6 144.1 L1429.0 130.6" fill="none" stroke="#5ea02a" stroke-width="1.9" stroke-dasharray="9.6 8.5" stroke-dashoffset="0"/><path d="M1144.7 670.4 L1152.3 656.9 L1159.9 643.4 L1167.6 629.9 L1175.3 616.4 L1183.1 602.9 L1190.9 589.4 L1198.8 575.9 L1206.7 562.4 L1214.6 548.9 L1222.6 535.4 L1230.6 521.9 L1238.7 508.4 L1246.8 494.9 L1255.0 481.4 L1263.2 467.9 L1271.4 454.4 L1279.7 440.9 L1288.0 427.4 L1296.3 413.9 L1304.7 400.5 L1313.1 387.0 L1321.6 373.5 L1330.1 360.0 L1338.6 346.5 L1347.2 333.0 L1355.8 319.5 L1364.5 306.0 L1373.2 292.5 L1381.9 279.0 L1390.6 265.5 L1399.4 252.0 L1408.2 238.5 L1417.1 225.0 L1426.0 211.5 L1434.9 198.0 L1443.8 184.5 L1452.8 171.0 L1461.8 157.5 L1470.8 144.1 L1479.9 130.6" fill="none" stroke="#5ea02a" stroke-width="1.9" stroke-dasharray="9.6 8.5" stroke-dashoffset="5"/><path d="M1200.7 670.4 L1207.8 656.9 L1215.0 643.4 L1222.2 629.9 L1229.5 616.4 L1236.9 602.9 L1244.2 589.4 L1251.7 575.9 L1259.2 562.4 L1266.7 548.9 L1274.3 535.4 L1281.9 521.9 L1289.6 508.4 L1297.3 494.9 L1305.0 481.4 L1312.8 467.9 L1320.7 454.4 L1328.6 440.9 L1336.5 427.4 L1344.5 413.9 L1352.5 400.5 L1360.6 387.0 L1368.7 373.5 L1376.9 360.0 L1385.1 346.5 L1393.3 333.0 L1401.6 319.5 L1409.9 306.0 L1418.2 292.5 L1426.6 279.0 L1435.0 265.5 L1443.5 252.0 L1452.0 238.5 L1460.5 225.0 L1469.1 211.5 L1477.7 198.0 L1486.3 184.5 L1495.0 171.0 L1503.7 157.5 L1512.5 144.1 L1521.3 130.6" fill="none" stroke="#5ea02a" stroke-width="1.9" stroke-dasharray="9.6 8.5" stroke-dashoffset="10"/><path d="M1260.9 670.4 L1267.6 656.9 L1274.2 643.4 L1281.0 629.9 L1287.8 616.4 L1294.6 602.9 L1301.5 589.4 L1308.5 575.9 L1315.5 562.4 L1322.6 548.9 L1329.7 535.4 L1336.9 521.9 L1344.1 508.4 L1351.4 494.9 L1358.7 481.4 L1366.1 467.9 L1373.5 454.4 L1381.0 440.9 L1388.5 427.4 L1396.1 413.9 L1403.7 400.5 L1411.4 387.0 L1419.1 373.5 L1426.9 360.0 L1434.7 346.5 L1442.5 333.0 L1450.4 319.5 L1458.4 306.0 L1466.3 292.5 L1474.4 279.0 L1482.4 265.5 L1490.5 252.0 L1498.7 238.5 L1506.9 225.0 L1515.1 211.5 L1523.4 198.0 L1531.7 184.5 L1540.0 171.0 L1548.4 157.5 L1556.8 144.1 L1565.3 130.6" fill="none" stroke="#5ea02a" stroke-width="1.9" stroke-dasharray="9.6 8.5" stroke-dashoffset="15"/><path d="M1312.9 670.4 L1319.1 656.9 L1325.3 643.4 L1331.6 629.9 L1338.0 616.4 L1344.4 602.9 L1350.9 589.4 L1357.4 575.9 L1364.0 562.4 L1370.7 548.9 L1377.4 535.4 L1384.2 521.9 L1391.0 508.4 L1397.9 494.9 L1404.8 481.4 L1411.8 467.9 L1418.9 454.4 L1426.0 440.9 L1433.2 427.4 L1440.4 413.9 L1447.6 400.5 L1454.9 387.0 L1462.3 373.5 L1469.7 360.0 L1477.2 346.5 L1484.7 333.0 L1492.3 319.5 L1499.9 306.0 L1507.5 292.5 L1515.2 279.0 L1523.0 265.5 L1530.8 252.0 L1538.6 238.5 L1546.5 225.0 L1554.4 211.5 L1562.4 198.0 L1570.4 184.5 L1578.5 171.0 L1586.5 157.5 L1594.7 144.1 L1602.9 130.6" fill="none" stroke="#5ea02a" stroke-width="1.9" stroke-dasharray="9.6 8.5" stroke-dashoffset="2"/><path d="M1347.7 670.4 L1353.5 656.9 L1359.5 643.4 L1365.4 629.9 L1371.5 616.4 L1377.6 602.9 L1383.8 589.4 L1390.1 575.9 L1396.4 562.4 L1402.8 548.9 L1409.2 535.4 L1415.7 521.9 L1422.3 508.4 L1428.9 494.9 L1435.6 481.4 L1442.3 467.9 L1449.1 454.4 L1456.0 440.9 L1462.9 427.4 L1469.9 413.9 L1476.9 400.5 L1483.9 387.0 L1491.1 373.5 L1498.3 360.0 L1505.5 346.5 L1512.8 333.0 L1520.1 319.5 L1527.5 306.0 L1534.9 292.5 L1542.4 279.0 L1549.9 265.5 L1557.5 252.0 L1565.2 238.5 L1572.8 225.0 L1580.5 211.5 L1588.3 198.0 L1596.1 184.5 L1604.0 171.0 L1611.9 157.5 L1619.8 144.1 L1627.8 130.6" fill="none" stroke="#5ea02a" stroke-width="1.9" stroke-dasharray="9.6 8.5" stroke-dashoffset="7"/><path d="M1395.5 670.4 L1400.9 656.9 L1406.4 643.4 L1411.9 629.9 L1417.6 616.4 L1423.3 602.9 L1429.0 589.4 L1434.9 575.9 L1440.8 562.4 L1446.8 548.9 L1452.8 535.4 L1459.0 521.9 L1465.2 508.4 L1471.4 494.9 L1477.7 481.4 L1484.1 467.9 L1490.5 454.4 L1497.0 440.9 L1503.6 427.4 L1510.2 413.9 L1516.9 400.5 L1523.6 387.0 L1530.4 373.5 L1537.3 360.0 L1544.2 346.5 L1551.2 333.0 L1558.2 319.5 L1565.2 306.0 L1572.4 292.5 L1579.5 279.0 L1586.8 265.5 L1594.1 252.0 L1601.4 238.5 L1608.8 225.0 L1616.2 211.5 L1623.7 198.0 L1631.2 184.5 L1638.8 171.0 L1646.4 157.5 L1654.1 144.1 L1661.8 130.6" fill="none" stroke="#5ea02a" stroke-width="1.9" stroke-dasharray="9.6 8.5" stroke-dashoffset="12"/><path d="M1438.4 670.4 L1443.4 656.9 L1448.5 643.4 L1453.7 629.9 L1458.9 616.4 L1464.3 602.9 L1469.7 589.4 L1475.1 575.9 L1480.7 562.4 L1486.3 548.9 L1492.0 535.4 L1497.8 521.9 L1503.6 508.4 L1509.5 494.9 L1515.5 481.4 L1521.5 467.9 L1527.6 454.4 L1533.8 440.9 L1540.1 427.4 L1546.4 413.9 L1552.7 400.5 L1559.2 387.0 L1565.6 373.5 L1572.2 360.0 L1578.8 346.5 L1585.5 333.0 L1592.2 319.5 L1599.0 306.0 L1605.8 292.5 L1612.7 279.0 L1619.7 265.5 L1626.7 252.0 L1633.8 238.5 L1640.9 225.0 L1648.1 211.5 L1655.3 198.0 L1662.5 184.5 L1669.9 171.0 L1677.2 157.5 L1684.7 144.1 L1692.1 130.6" fill="none" stroke="#5ea02a" stroke-width="1.9" stroke-dasharray="9.6 8.5" stroke-dashoffset="17"/><path d="M1469.8 670.4 L1474.5 656.9 L1479.3 643.4 L1484.2 629.9 L1489.2 616.4 L1494.2 602.9 L1499.3 589.4 L1504.5 575.9 L1509.8 562.4 L1515.1 548.9 L1520.6 535.4 L1526.1 521.9 L1531.7 508.4 L1537.3 494.9 L1543.0 481.4 L1548.8 467.9 L1554.7 454.4 L1560.6 440.9 L1566.6 427.4 L1572.7 413.9 L1578.8 400.5 L1585.0 387.0 L1591.3 373.5 L1597.6 360.0 L1604.0 346.5 L1610.5 333.0 L1617.0 319.5 L1623.5 306.0 L1630.2 292.5 L1636.9 279.0 L1643.6 265.5 L1650.4 252.0 L1657.3 238.5 L1664.2 225.0 L1671.2 211.5 L1678.2 198.0 L1685.3 184.5 L1692.4 171.0 L1699.6 157.5 L1706.9 144.1 L1714.2 130.6" fill="none" stroke="#5ea02a" stroke-width="1.9" stroke-dasharray="9.6 8.5" stroke-dashoffset="4"/><path d="M1381.0 130.2 L1336.6 156.4 L1302.4 176.9 L1279.6 192.9 L1263.7 205.4 L1249.0 219.0 L1233.9 236.2 L1223.2 253.4 L1214.6 270.6 L1205.3 297.8 L1193.9 324.4 L1183.3 347.2 L1177.5 363.7 L1174.9 376.3 L1176.7 389.0 L1182.5 402.9 L1190.1 413.0 L1206.6 428.2 L1219.0 440.0 L1237.2 455.2 L1259.5 473.4 L1277.8 488.6 L1294.0 503.8 L1306.1 518.0 L1318.3 535.2 L1328.4 551.4 L1339.6 570.7 L1348.7 586.9 L1355.8 599.0 L1361.5 607.7 L1364.8 616.8 L1364.8 623.3 L1361.5 631.6 L1354.9 640.6 L1347.5 648.8 L1331.9 656.2 L1326.1 659.2 L1323.7 664.2 L993.0 664.4" fill="none" stroke="#d8411c" stroke-width="1.9" stroke-linejoin="round"/><path d="M1190.9 130.1 L1173.7 152.3 L1158.6 173.8 L1143.5 195.3 L1130.6 216.8 L1119.9 234.0 L1112.3 251.3 L1107.0 268.5 L1103.3 290.3 L1102.8 297.8 L1102.3 315.6 L1104.6 327.0 L1112.4 351.0 L1118.0 366.2 L1124.3 378.9 L1134.4 395.3 L1137.0 404.2 L1140.8 414.3 L1147.1 424.4 L1153.4 439.6 L1158.2 448.5 L1160.3 460.3 L1163.3 472.4 L1162.7 479.5 L1168.4 494.7 L1176.5 505.8 L1186.6 516.0 L1198.8 524.1 L1210.9 531.2 L1220.0 538.3 L1227.1 544.3 L1241.3 552.4 L1253.5 558.5 L1263.6 566.6 L1269.0 576.5 L1269.7 583.0 L1272.0 588.3 L1270.3 592.9 L1271.0 598.7 L1268.5 605.2 L1264.4 611.3 L1265.7 617.6 L1266.1 622.5 L1270.2 632.4 L1283.3 643.6 L1297.3 648.8 L1299.0 657.1 L1300.9 664.2 L993.0 664.4" fill="none" stroke="#4b8a08" stroke-width="2" stroke-linejoin="round"/></g><rect x="992.5" y="129.95" width="1.7" height="540.9499999999999" fill="#000"/><rect x="1545.8" y="129.95" width="1.7" height="540.9499999999999" fill="#000"/><rect x="993.3" y="253.0" width="7" height="1" fill="#000"/><rect x="1541.7" y="253.0" width="5" height="1" fill="#000"/><text x="986" y="259.0516630121557" font-size="15.6" fill="#000" text-anchor="end" font-weight="normal" textLength="32" lengthAdjust="spacingAndGlyphs" >100</text><rect x="993.3" y="375.8" width="7" height="1" fill="#000"/><rect x="1541.7" y="375.8" width="5" height="1" fill="#000"/><text x="986" y="381.94665812543406" font-size="15.6" fill="#000" text-anchor="end" font-weight="normal" textLength="32" lengthAdjust="spacingAndGlyphs" >200</text><rect x="993.3" y="447.7" width="7" height="1" fill="#000"/><rect x="1541.7" y="447.7" width="5" height="1" fill="#000"/><text x="986" y="453.83562179301157" font-size="15.6" fill="#000" text-anchor="end" font-weight="normal" textLength="32" lengthAdjust="spacingAndGlyphs" >300</text><rect x="993.3" y="498.7" width="7" height="1" fill="#000"/><rect x="1541.7" y="498.7" width="5" height="1" fill="#000"/><text x="986" y="504.84165323871235" font-size="15.6" fill="#000" text-anchor="end" font-weight="normal" textLength="32" lengthAdjust="spacingAndGlyphs" >400</text><rect x="993.3" y="538.3" width="7" height="1" fill="#000"/><rect x="1541.7" y="538.3" width="5" height="1" fill="#000"/><text x="986" y="544.4050048867217" font-size="15.6" fill="#000" text-anchor="end" font-weight="normal" textLength="32" lengthAdjust="spacingAndGlyphs" >500</text><rect x="993.3" y="570.6" width="7" height="1" fill="#000"/><rect x="1541.7" y="570.6" width="5" height="1" fill="#000"/><text x="986" y="576.7306169062899" font-size="15.6" fill="#000" text-anchor="end" font-weight="normal" textLength="32" lengthAdjust="spacingAndGlyphs" >600</text><rect x="993.3" y="598.0" width="7" height="1" fill="#000"/><rect x="1541.7" y="598.0" width="5" height="1" fill="#000"/><text x="986" y="604.0615324396628" font-size="15.6" fill="#000" text-anchor="end" font-weight="normal" textLength="32" lengthAdjust="spacingAndGlyphs" >700</text><rect x="993.3" y="621.6" width="7" height="1" fill="#000"/><rect x="1541.7" y="621.6" width="5" height="1" fill="#000"/><text x="986" y="627.7366483519907" font-size="15.6" fill="#000" text-anchor="end" font-weight="normal" textLength="32" lengthAdjust="spacingAndGlyphs" >800</text><rect x="993.3" y="642.5" width="7" height="1" fill="#000"/><rect x="1541.7" y="642.5" width="5" height="1" fill="#000"/><text x="986" y="648.6195805738674" font-size="15.6" fill="#000" text-anchor="end" font-weight="normal" textLength="32" lengthAdjust="spacingAndGlyphs" >900</text><rect x="993.3" y="661.2" width="7" height="1" fill="#000"/><rect x="1541.7" y="661.2" width="5" height="1" fill="#000"/><text x="986" y="667.3000000000001" font-size="15.6" fill="#000" text-anchor="end" font-weight="normal" textLength="42.6" lengthAdjust="spacingAndGlyphs" >1000</text><rect x="993.3" y="130.2" width="3.5" height="0.8" fill="#000"/><rect x="1543.2" y="130.2" width="3.5" height="0.8" fill="#000"/><rect x="993.3" y="162.5" width="3.5" height="0.8" fill="#000"/><rect x="1543.2" y="162.5" width="3.5" height="0.8" fill="#000"/><rect x="993.3" y="189.8" width="3.5" height="0.8" fill="#000"/><rect x="1543.2" y="189.8" width="3.5" height="0.8" fill="#000"/><rect x="993.3" y="213.5" width="3.5" height="0.8" fill="#000"/><rect x="1543.2" y="213.5" width="3.5" height="0.8" fill="#000"/><rect x="993.3" y="234.4" width="3.5" height="0.8" fill="#000"/><rect x="1543.2" y="234.4" width="3.5" height="0.8" fill="#000"/><rect x="993.0" y="665.4" width="1" height="5" fill="#000"/><text x="992.7" y="690" font-size="15.6" fill="#000" text-anchor="middle" font-weight="normal" textLength="35.5" lengthAdjust="spacingAndGlyphs" >−40</text><rect x="1058.1" y="665.4" width="1" height="5" fill="#000"/><text x="1057.85" y="690" font-size="15.6" fill="#000" text-anchor="middle" font-weight="normal" textLength="35.5" lengthAdjust="spacingAndGlyphs" >−30</text><rect x="1123.3" y="665.4" width="1" height="5" fill="#000"/><text x="1123.0" y="690" font-size="15.6" fill="#000" text-anchor="middle" font-weight="normal" textLength="35.5" lengthAdjust="spacingAndGlyphs" >−20</text><rect x="1188.4" y="665.4" width="1" height="5" fill="#000"/><text x="1188.1499999999999" y="690" font-size="15.6" fill="#000" text-anchor="middle" font-weight="normal" textLength="35.5" lengthAdjust="spacingAndGlyphs" >−10</text><rect x="1253.6" y="665.4" width="1" height="5" fill="#000"/><text x="1254.1" y="690" font-size="15.6" fill="#000" text-anchor="middle" font-weight="normal" textLength="10" lengthAdjust="spacingAndGlyphs" >0</text><rect x="1318.8" y="665.4" width="1" height="5" fill="#000"/><text x="1319.25" y="690" font-size="15.6" fill="#000" text-anchor="middle" font-weight="normal" textLength="20.5" lengthAdjust="spacingAndGlyphs" >10</text><rect x="1383.9" y="665.4" width="1" height="5" fill="#000"/><text x="1384.3999999999999" y="690" font-size="15.6" fill="#000" text-anchor="middle" font-weight="normal" textLength="20.5" lengthAdjust="spacingAndGlyphs" >20</text><rect x="1449.0" y="665.4" width="1" height="5" fill="#000"/><text x="1449.55" y="690" font-size="15.6" fill="#000" text-anchor="middle" font-weight="normal" textLength="20.5" lengthAdjust="spacingAndGlyphs" >30</text><rect x="1514.2" y="665.4" width="1" height="5" fill="#000"/><text x="1514.6999999999998" y="690" font-size="15.6" fill="#000" text-anchor="middle" font-weight="normal" textLength="20.5" lengthAdjust="spacingAndGlyphs" >40</text><rect x="1272.6" y="130.25" width="0.9" height="4.5" fill="#000"/><rect x="1337.8" y="130.25" width="0.9" height="4.5" fill="#000"/><rect x="1402.9" y="130.25" width="0.9" height="4.5" fill="#000"/><rect x="1468.1" y="130.25" width="0.9" height="4.5" fill="#000"/><rect x="1533.2" y="130.25" width="0.9" height="4.5" fill="#000"/>
<rect x="903" y="754" width="792" height="36" fill="url(#bandG)"/><rect x="1694" y="0" width="1" height="790" fill="#1b2034"/><path d="M1694 750 Q1694 754 1690 754 H1695 V738 H1694Z" fill="#1b2034"/><rect x="1091" y="771" width="19" height="12" fill="#3a4d86" opacity="0.45"/><rect x="956" y="755" width="33" height="8" fill="#2b3560" opacity="0.45"/><rect x="1055" y="777" width="24" height="12" fill="#273054" opacity="0.45"/><rect x="1403" y="760" width="27" height="15" fill="#3a4d86" opacity="0.45"/><rect x="1209" y="755" width="31" height="7" fill="#3a4d86" opacity="0.45"/><rect x="938" y="778" width="33" height="8" fill="#3a4d86" opacity="0.45"/><rect x="1466" y="781" width="29" height="16" fill="#273054" opacity="0.45"/><rect x="1473" y="772" width="37" height="7" fill="#454a78" opacity="0.45"/><rect x="981" y="759" width="15" height="17" fill="#273054" opacity="0.45"/><rect x="1513" y="781" width="21" height="15" fill="#3a4d86" opacity="0.45"/><rect x="1179" y="773" width="26" height="16" fill="#3c4470" opacity="0.45"/><rect x="1573" y="785" width="28" height="7" fill="#454a78" opacity="0.45"/><rect x="1657" y="782" width="25" height="14" fill="#2b3560" opacity="0.45"/><rect x="1399" y="785" width="16" height="6" fill="#273054" opacity="0.45"/><rect x="1571" y="785" width="11" height="15" fill="#273054" opacity="0.45"/><rect x="1605" y="756" width="21" height="10" fill="#3c4470" opacity="0.45"/><rect x="939" y="773" width="9" height="14" fill="#454a78" opacity="0.45"/><rect x="1335" y="783" width="16" height="8" fill="#3c4470" opacity="0.45"/><rect x="1147" y="757" width="26" height="5" fill="#2b3560" opacity="0.45"/><rect x="1663" y="764" width="16" height="13" fill="#454a78" opacity="0.45"/><rect x="1150" y="784" width="35" height="10" fill="#273054" opacity="0.45"/><rect x="1584" y="767" width="34" height="13" fill="#3c4470" opacity="0.45"/><rect x="1389" y="783" width="23" height="10" fill="#2b3560" opacity="0.45"/><rect x="1635" y="768" width="16" height="9" fill="#454a78" opacity="0.45"/><rect x="914" y="767" width="25" height="5" fill="#3a4d86" opacity="0.45"/><rect x="1365" y="759" width="27" height="9" fill="#454a78" opacity="0.45"/><rect x="1435" y="766" width="29" height="14" fill="#3c4470" opacity="0.45"/><rect x="1365" y="784" width="9" height="9" fill="#273054" opacity="0.45"/><rect x="1138" y="773" width="13" height="7" fill="#454a78" opacity="0.45"/><rect x="1563" y="763" width="32" height="6" fill="#3c4470" opacity="0.45"/><rect x="1663" y="776" width="12" height="11" fill="#454a78" opacity="0.45"/><rect x="1091" y="761" width="21" height="13" fill="#3c4470" opacity="0.45"/><rect x="1374" y="783" width="28" height="8" fill="#2b3560" opacity="0.45"/><rect x="967" y="777" width="15" height="12" fill="#454a78" opacity="0.45"/><rect x="1081" y="759" width="24" height="7" fill="#3a4d86" opacity="0.45"/><rect x="1048" y="763" width="32" height="13" fill="#3a4d86" opacity="0.45"/><rect x="1174" y="759" width="17" height="15" fill="#454a78" opacity="0.45"/><rect x="1267" y="774" width="17" height="12" fill="#3c4470" opacity="0.45"/><rect x="1623" y="760" width="8" height="16" fill="#3a4d86" opacity="0.45"/><rect x="1675" y="768" width="37" height="16" fill="#2b3560" opacity="0.45"/><rect x="930" y="769" width="31" height="14" fill="#454a78" opacity="0.45"/><rect x="1329" y="782" width="34" height="15" fill="#454a78" opacity="0.45"/><rect x="999" y="762" width="9" height="15" fill="#3a4d86" opacity="0.45"/><rect x="1626" y="782" width="35" height="12" fill="#3c4470" opacity="0.45"/><rect x="1280" y="759" width="23" height="8" fill="#3c4470" opacity="0.45"/><rect x="1314" y="767" width="36" height="12" fill="#454a78" opacity="0.45"/><rect x="1003" y="784" width="24" height="15" fill="#3c4470" opacity="0.45"/><rect x="1179" y="761" width="24" height="15" fill="#2b3560" opacity="0.45"/><rect x="1092" y="763" width="35" height="7" fill="#3c4470" opacity="0.45"/><rect x="1285" y="772" width="20" height="14" fill="#2b3560" opacity="0.45"/><rect x="1114" y="771" width="21" height="11" fill="#3c4470" opacity="0.45"/><rect x="1573" y="778" width="9" height="6" fill="#273054" opacity="0.45"/><rect x="1665" y="781" width="11" height="11" fill="#454a78" opacity="0.45"/><rect x="1027" y="757" width="20" height="10" fill="#454a78" opacity="0.45"/><rect x="1186" y="761" width="18" height="6" fill="#3a4d86" opacity="0.45"/><rect x="908" y="777" width="32" height="12" fill="#3c4470" opacity="0.45"/><rect x="1196" y="773" width="31" height="10" fill="#3c4470" opacity="0.45"/><rect x="1391" y="768" width="19" height="11" fill="#454a78" opacity="0.45"/><rect x="1233" y="776" width="22" height="8" fill="#3a4d86" opacity="0.45"/><rect x="1116" y="773" width="32" height="8" fill="#2b3560" opacity="0.45"/><rect x="1590" y="756" width="104" height="8" fill="#6d7597" opacity="0.35"/><path d="M903 777 L975 790" stroke="#d4141c" stroke-width="2.6"/><circle cx="936" cy="787.2" r="1.8" fill="#e88"/><path d="M906.0 781.1 A8.6 8.6 0 1 1 923.2 781.1 Q922.7 786.1 917.6 790.6 V790 H911.6 V790.6 Q906.5 786.1 906.0 781.1 Z" fill="url(#pinY)" stroke="#141414" stroke-width="1.1"/><circle cx="950.2" cy="783" r="8.4" fill="#4169cd" stroke="#101010" stroke-width="1.2"/><circle cx="950.2" cy="783.5" r="2.3" fill="#000"/><path d="M970.0 783.6 A8.6 8.6 0 1 1 987.2 783.6 Q986.7 788.6 981.6 793.1 V790 H975.6 V793.1 Q970.5 788.6 970.0 783.6 Z" fill="url(#pinY)" stroke="#141414" stroke-width="1.1"/><path d="M1036.4 783.6 A8.6 8.6 0 1 1 1053.6 783.6 Q1053.1 788.6 1048 793.1 V790 H1042 V793.1 Q1036.9 788.6 1036.4 783.6 Z" fill="url(#pinY)" stroke="#141414" stroke-width="1.1"/><circle cx="1052.7" cy="783" r="8.4" fill="#4169cd" stroke="#101010" stroke-width="1.2"/><circle cx="1052.7" cy="783.5" r="2.3" fill="#000"/><path d="M1100.9 784.6 A8.6 8.6 0 1 1 1118.1 784.6 Q1117.6 789.6 1112.5 794.1 V790 H1106.5 V794.1 Q1101.4 789.6 1100.9 784.6 Z" fill="url(#pinY)" stroke="#141414" stroke-width="1.1"/><path d="M1164.4 783.6 A8.6 8.6 0 1 1 1181.6 783.6 Q1181.1 788.6 1176 793.1 V790 H1170 V793.1 Q1164.9 788.6 1164.4 783.6 Z" fill="url(#pinY)" stroke="#141414" stroke-width="1.1"/><path d="M1228.1000000000001 781.1 A8.6 8.6 0 1 1 1245.3 781.1 Q1244.8 786.1 1239.7 790.6 V790 H1233.7 V790.6 Q1228.6000000000001 786.1 1228.1000000000001 781.1 Z" fill="url(#pinY)" stroke="#141414" stroke-width="1.1"/><path d="M1290.9 785.1 A8.6 8.6 0 1 1 1308.1 785.1 Q1307.6 790.1 1302.5 794.6 V790 H1296.5 V794.6 Q1291.4 790.1 1290.9 785.1 Z" fill="url(#pinY)" stroke="#141414" stroke-width="1.1"/><path d="M1360.7 785.1 A8.6 8.6 0 1 1 1377.8999999999999 785.1 Q1377.3999999999999 790.1 1372.3 794.6 V790 H1366.3 V794.6 Q1361.2 790.1 1360.7 785.1 Z" fill="url(#pinY)" stroke="#141414" stroke-width="1.1"/><path d="M1465.6000000000001 781.1 A8.6 8.6 0 1 1 1482.8 781.1 Q1482.3 786.1 1477.2 790.6 V790 H1471.2 V790.6 Q1466.1000000000001 786.1 1465.6000000000001 781.1 Z" fill="url(#pinY)" stroke="#141414" stroke-width="1.1"/><path d="M1531.7 784.6 A8.6 8.6 0 1 1 1548.8999999999999 784.6 Q1548.3999999999999 789.6 1543.3 794.1 V790 H1537.3 V794.1 Q1532.2 789.6 1531.7 784.6 Z" fill="url(#pinY)" stroke="#141414" stroke-width="1.1"/><path d="M1582 790 L1594 780.5 L1594 790 Z" fill="#6a3428"/><path d="M1598 790 L1604 787 L1606 790Z" fill="#6a3428"/>
</svg>
</body></html>
